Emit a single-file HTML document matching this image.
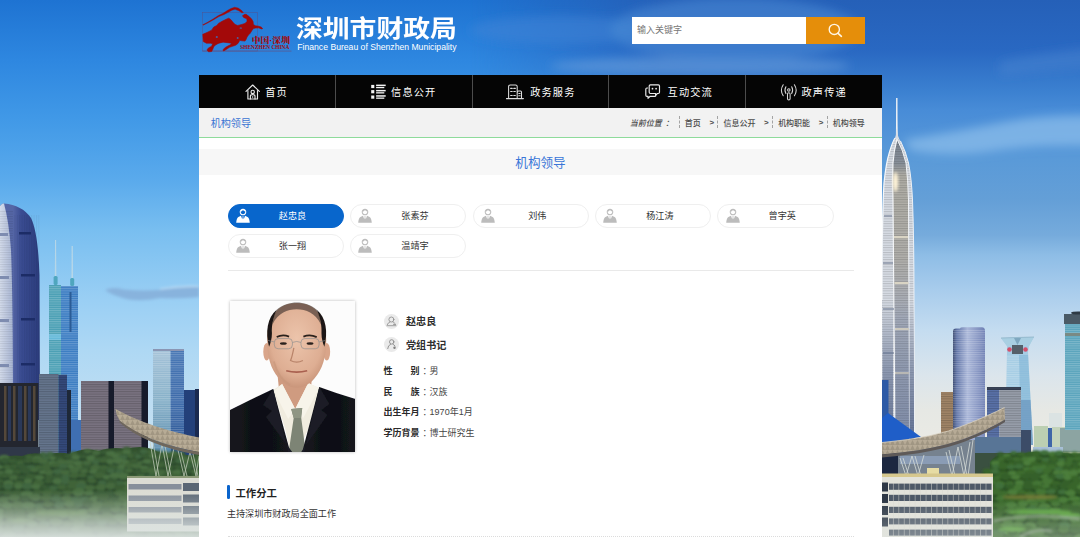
<!DOCTYPE html>
<html lang="zh-CN">
<head>
<meta charset="utf-8">
<title>机构领导 - 深圳市财政局</title>
<style>
*{box-sizing:border-box;margin:0;padding:0}
html,body{width:1080px;height:537px;overflow:hidden}
body{position:relative;font-family:"Liberation Sans","Noto Sans CJK SC",sans-serif;color:#333;background:#4a95dd}
a{color:inherit;text-decoration:none}
#bg{position:absolute;left:0;top:0;width:1080px;height:537px;display:block}
.abs{position:absolute}
/* header */
#logo{position:absolute;left:196px;top:2px;width:100px;height:56px}
#title{position:absolute;left:296px;top:11.5px;font-size:26.8px;font-weight:700;color:#fff;line-height:34px;white-space:nowrap;transform:scaleY(.89);transform-origin:0 50%}
#subtitle{position:absolute;left:297.3px;top:41.3px;font-size:8.64px;color:#fff;line-height:12px;white-space:nowrap}
#search{position:absolute;left:631.8px;top:17.4px;width:174.4px;height:26.4px;background:#fff;font-size:9px;color:#777;line-height:26.4px;padding-left:5.2px}
#sbtn{position:absolute;left:806px;top:17.4px;width:59px;height:26.4px;background:#e58e0a}
/* nav */
#nav{position:absolute;left:198.7px;top:74.8px;width:683.6px;height:33.6px;background:#050505}
#nav .dv{position:absolute;top:0;width:1px;height:33.6px;background:#4c4c4c}
#nav .ni{position:absolute;display:block}
#nav .nt{position:absolute;top:10.1px;line-height:15px;font-size:10.2px;font-weight:400;color:#fff;letter-spacing:1.15px;white-space:nowrap}
/* panel */
#panel{position:absolute;left:198.7px;top:108.3px;width:683.6px;height:430px;background:#fff}
#crumb{position:absolute;left:0;top:0;width:100%;height:30.1px;background:#f2f2f2;border-bottom:1.6px solid #8edb9b}
#crumb .cur{position:absolute;left:12px;top:1.6px;line-height:28px;font-size:10.1px;color:#3a74d2}
#crumb .path{position:absolute;right:17.5px;top:0;height:28px;display:flex;align-items:center;font-size:8px;font-weight:500;color:#4c4c4c;white-space:nowrap}
#crumb .path i{font-style:italic;margin-right:5.7px;color:#4a4a4a}
#crumb .path .s{border-left:1px dashed #a4a4a4;height:12px;margin:0 5px 0 0}
#crumb .path .g{margin:0 3.4px 0 8.6px;font-weight:700}
#band{position:absolute;left:0;top:40.8px;width:100%;height:25.8px;background:#f7f7f7;text-align:center;line-height:29.8px;font-size:12.6px;color:#3a76d8;overflow:hidden}

/* tabs */
.pill{position:absolute;width:116.2px;height:24px;border:1px solid #efefef;border-radius:12.5px;background:#fff;font-size:9.1px;color:#333;line-height:22px}
.pill.on{background:#0866cc;border-color:#0866cc;color:#fff}
.pill span{position:absolute;left:23px;right:0;top:.5px;text-align:center;padding-right:9.5px}
.pill svg{position:absolute;left:7.4px;top:3.2px;width:14px;height:15px;color:#bcbcbc}
.pill.on svg{color:#fff}
#hr1{position:absolute;left:227.5px;top:269.5px;width:626px;height:1px;background:#e9e9e9}
#photo{position:absolute;left:230px;top:301px;width:125.4px;height:151px;box-shadow:0 0 3px rgba(0,0,0,.28);background:#fdfdfd;overflow:hidden}
#photo svg{display:block;width:100%;height:100%}
.nm{position:absolute;left:406px;font-size:10.1px;font-weight:700;color:#2e2e2e;line-height:14px;white-space:nowrap}
.ic{position:absolute;left:384.3px;width:15px;height:15px}
.row{position:absolute;left:383.4px;font-size:9px;color:#444;line-height:14px;white-space:nowrap}
.row b{color:#2a2a2a;font-weight:700}
.row .cl{position:relative;left:3.1px;margin-right:1.2px}
#wk{position:absolute;left:227.3px;top:485.2px;width:2.8px;height:13.6px;background:#0a64cc;border-radius:1.2px}
#wkt{position:absolute;left:235.4px;top:486.6px;font-size:10.4px;font-weight:700;color:#222;line-height:14px}
#wkd{position:absolute;left:226.9px;top:506.5px;font-size:9.1px;color:#333;line-height:14px;white-space:nowrap}
#hr2{position:absolute;left:227.5px;top:535.6px;width:626px;height:0;border-top:1px dotted #dcdcdc}
</style>
</head>
<body>
<svg id="bg" viewBox="0 0 1080 537" preserveAspectRatio="none">
<defs>
<linearGradient id="skyL" x1="0" y1="0" x2="0" y2="537" gradientUnits="userSpaceOnUse">
<stop offset="0.000" stop-color="#1e73d2"/><stop offset="0.112" stop-color="#2e87e0"/><stop offset="0.223" stop-color="#4199e7"/><stop offset="0.335" stop-color="#5aaaec"/><stop offset="0.428" stop-color="#78bef0"/><stop offset="0.559" stop-color="#9acff4"/><stop offset="0.652" stop-color="#aed8f4"/><stop offset="0.726" stop-color="#badcf3"/><stop offset="0.819" stop-color="#c4e0f2"/><stop offset="1.000" stop-color="#d6e2e6"/>
</linearGradient>
<linearGradient id="skyR" x1="0" y1="0" x2="0" y2="537" gradientUnits="userSpaceOnUse">
<stop offset="0.000" stop-color="#2560b8"/><stop offset="0.093" stop-color="#2968c2"/><stop offset="0.168" stop-color="#3b80d0"/><stop offset="0.205" stop-color="#488cd7"/><stop offset="0.251" stop-color="#5193d8"/><stop offset="0.298" stop-color="#5a9ad8"/><stop offset="0.372" stop-color="#649fd7"/><stop offset="0.438" stop-color="#76abdc"/><stop offset="0.475" stop-color="#8ebde6"/><stop offset="0.540" stop-color="#a8ccec"/><stop offset="0.615" stop-color="#c4dcf0"/><stop offset="0.698" stop-color="#dbe5ec"/><stop offset="0.764" stop-color="#e6e8e4"/><stop offset="0.819" stop-color="#eaeae4"/><stop offset="1.000" stop-color="#e6e8e2"/>
</linearGradient>
<linearGradient id="hblend" x1="470" y1="0" x2="660" y2="0" gradientUnits="userSpaceOnUse">
<stop offset="0" stop-color="#fff" stop-opacity="0"/><stop offset="1" stop-color="#fff" stop-opacity="1"/>
</linearGradient>
<mask id="mR"><rect x="0" y="0" width="1080" height="537" fill="url(#hblend)"/></mask>
<linearGradient id="fogL" x1="0" y1="490" x2="0" y2="537" gradientUnits="userSpaceOnUse">
<stop offset="0" stop-color="#dfe6e2" stop-opacity="0"/><stop offset=".35" stop-color="#dfe6e2" stop-opacity=".3"/><stop offset=".7" stop-color="#dde4e2" stop-opacity=".68"/><stop offset="1" stop-color="#dde4e2" stop-opacity=".93"/>
</linearGradient>
<linearGradient id="fogR" x1="0" y1="500" x2="0" y2="537" gradientUnits="userSpaceOnUse">
<stop offset="0" stop-color="#e4eae6" stop-opacity="0"/><stop offset="1" stop-color="#dde4e2" stop-opacity=".35"/>
</linearGradient>
<linearGradient id="kkR" x1="13" y1="0" x2="40" y2="0" gradientUnits="userSpaceOnUse">
<stop offset="0" stop-color="#5566a6"/><stop offset=".3" stop-color="#3a4c92"/><stop offset="1" stop-color="#2b3c7c"/>
</linearGradient>
<linearGradient id="kkL" x1="0" y1="0" x2="13" y2="0" gradientUnits="userSpaceOnUse">
<stop offset="0" stop-color="#d4dcec"/><stop offset="1" stop-color="#a9b6d4"/>
</linearGradient>
<linearGradient id="pa" x1="882" y1="0" x2="914" y2="0" gradientUnits="userSpaceOnUse">
<stop offset="0" stop-color="#dfe4ec"/><stop offset=".2" stop-color="#aab4c6"/><stop offset=".36" stop-color="#f4f2ea"/><stop offset=".5" stop-color="#b9c2d0"/><stop offset=".8" stop-color="#c3cbd8"/><stop offset=".92" stop-color="#8f9db6"/><stop offset="1" stop-color="#dfe5ee"/>
</linearGradient>
<linearGradient id="paC" x1="0" y1="139" x2="0" y2="440" gradientUnits="userSpaceOnUse"><stop offset="0" stop-color="#7d8692"/><stop offset=".08" stop-color="#8a929c"/><stop offset=".12" stop-color="#b0aea6"/><stop offset=".4" stop-color="#b2b1ad"/><stop offset=".6" stop-color="#a9b0be"/><stop offset="1" stop-color="#a3adc2"/></linearGradient>
<linearGradient id="paD" x1="0" y1="300" x2="0" y2="440" gradientUnits="userSpaceOnUse"><stop offset="0" stop-color="#46587f" stop-opacity="0"/><stop offset=".5" stop-color="#46587f" stop-opacity=".5"/><stop offset="1" stop-color="#3c4e78" stop-opacity=".75"/></linearGradient>
<linearGradient id="gtL" x1="0" y1="349" x2="0" y2="460" gradientUnits="userSpaceOnUse"><stop offset="0" stop-color="#a4c2d8"/><stop offset=".45" stop-color="#86b0c8"/><stop offset="1" stop-color="#5486aa"/></linearGradient>
<linearGradient id="gtR" x1="0" y1="349" x2="0" y2="460" gradientUnits="userSpaceOnUse"><stop offset="0" stop-color="#4676b4"/><stop offset=".5" stop-color="#3a68a8"/><stop offset="1" stop-color="#2b5490"/></linearGradient>
<linearGradient id="b2" x1="953" y1="0" x2="985" y2="0" gradientUnits="userSpaceOnUse">
<stop offset="0" stop-color="#3a4a70"/><stop offset=".12" stop-color="#6175a8"/><stop offset=".45" stop-color="#a9b6d8"/><stop offset="1" stop-color="#6f80b4"/>
</linearGradient>
<pattern id="hs" width="4" height="2.2" patternUnits="userSpaceOnUse"><rect width="4" height="1" fill="#fff" fill-opacity=".22"/></pattern>
<pattern id="hsd" width="4" height="2.4" patternUnits="userSpaceOnUse"><rect width="4" height="1" fill="#000" fill-opacity=".18"/></pattern>
<pattern id="vs" width="2.4" height="4" patternUnits="userSpaceOnUse"><rect width="1" height="4" fill="#000" fill-opacity=".15"/></pattern>
<pattern id="win" width="3.1" height="11.4" patternUnits="userSpaceOnUse"><rect x="0" y="0" width="2.5" height="6" fill="#4d5866"/></pattern>
<pattern id="vsw" width="5.45" height="4" patternUnits="userSpaceOnUse"><rect x="4.6" width=".85" height="4" fill="#d8d8d0"/></pattern>
<pattern id="tr" width="26" height="17" patternUnits="userSpaceOnUse"><rect width="26" height="17" fill="#3b6632"/><ellipse cx="5" cy="4" rx="5" ry="3" fill="#4a7a3c"/><ellipse cx="6" cy="7.500" rx="5.500" ry="2.200" fill="#274d23"/><ellipse cx="18" cy="3" rx="5" ry="2.600" fill="#457438"/><ellipse cx="19" cy="6.300" rx="5.500" ry="2" fill="#2a5125"/><ellipse cx="12" cy="11.500" rx="5.500" ry="2.800" fill="#4b7c3d"/><ellipse cx="13" cy="15" rx="6" ry="2" fill="#264a22"/><ellipse cx="24" cy="12" rx="4.500" ry="2.600" fill="#42703a"/><ellipse cx="0" cy="13" rx="3.500" ry="2.400" fill="#42703a"/><ellipse cx="25" cy="15.500" rx="4" ry="1.600" fill="#29502a"/></pattern>
<filter id="bl3" x="-5%" y="-5%" width="110%" height="110%"><feGaussianBlur stdDeviation=".9"/></filter>
<pattern id="tri" width="5" height="5" patternUnits="userSpaceOnUse"><path d="M0 5 L2.5 0 L5 5Z" fill="#8e8472" fill-opacity=".55"/></pattern>
<filter id="bl" x="-20%" y="-20%" width="140%" height="140%"><feGaussianBlur stdDeviation="5"/></filter>
<filter id="bl2" x="-20%" y="-20%" width="140%" height="140%"><feGaussianBlur stdDeviation="1.6"/></filter>
</defs>
<rect x="0" y="0" width="1080" height="537" fill="url(#skyL)"/>
<rect x="0" y="0" width="1080" height="537" fill="url(#skyR)" mask="url(#mR)"/>
<!-- clouds -->
<g filter="url(#bl)">
<ellipse cx="700" cy="66" rx="150" ry="9" fill="#6ba0dc" fill-opacity=".55"/>
<ellipse cx="560" cy="30" rx="90" ry="14" fill="#3f86d8" fill-opacity=".5"/>
<ellipse cx="735" cy="30" rx="125" ry="32" fill="#4a8ad6" fill-opacity=".55"/>
<path d="M905 140 Q960 131 1010 121 Q1050 114 1110 116 L1110 146 Q1040 144 1000 150 Q950 158 910 150Z" fill="#8dbfeb" fill-opacity=".7"/>
<path d="M1000 62 Q1040 52 1110 46 L1110 66 Q1040 70 1000 76Z" fill="#4a86d0" fill-opacity=".45"/>
</g>
<g filter="url(#bl2)">
<path d="M105 290 Q112 286.500 124 289.500 Q150 292 170 288.500 Q186 286 199 287 L199 297 Q180 299 160 298 Q135 303 120 297 Q110 294 105 290Z" fill="#86b0da" fill-opacity=".9"/>
<path d="M160 289 Q180 285.500 199 286.500" stroke="#d4e8f8" stroke-width="1.200" fill="none" opacity=".8"/>
</g>
<g id="left">
<!-- twin tower -->
<path d="M55.2 283 L55.6 240 L56 283Z M71.8 283 L72.2 246 L72.6 283Z" stroke="#bcd8e6" stroke-width=".7" fill="#bcd8e6"/>
<rect x="53.6" y="276" width="4" height="9" rx="1.5" fill="#4fa6be"/><rect x="70.2" y="278" width="4" height="8" rx="1.5" fill="#4fa6be"/>
<rect x="49" y="285" width="12" height="177" fill="#4a9fb4"/>
<rect x="61" y="286" width="17" height="176" fill="#3a7cc2"/>
<rect x="49" y="334" width="12" height="6" fill="#63b8d8"/>
<rect x="49" y="285" width="29" height="165" fill="url(#hs)"/>
<rect x="69.5" y="292" width="2" height="40" fill="#2b5c96"/>
<!-- KK100 -->
<path d="M0 206 Q2 203 4 203.5 Q22 205 31 218 Q38 232 39.5 275 L40 420 L0 420Z" fill="url(#kkR)"/>
<path d="M0 206 Q2 203 4 203.5 Q9 222 11 250 Q13 300 13 420 L0 420Z" fill="url(#kkL)"/>
<rect x="0" y="210" width="13" height="210" fill="url(#hsd)" opacity=".5"/>
<rect x="14" y="215" width="26" height="205" fill="url(#vs)" opacity=".35"/>
<g fill="#1c2c66"><rect x="19" y="232" width="12" height="2.5"/><rect x="21" y="274" width="14" height="2.5"/><rect x="21" y="318" width="14" height="2.5"/><rect x="21" y="363" width="14" height="2.5"/></g>
<g fill="#7e8cb0"><rect x="0" y="233" width="8" height="3"/><rect x="0" y="276" width="9" height="3"/><rect x="0" y="319" width="9" height="3"/><rect x="0" y="364" width="9" height="3"/></g>
<!-- glass tower right -->
<rect x="153" y="349" width="17.5" height="112" fill="url(#gtL)"/>
<rect x="170.5" y="350" width="13.5" height="111" fill="url(#gtR)"/>
<rect x="153" y="349" width="31" height="100" fill="url(#hs)"/>
<rect x="153" y="349" width="31" height="2" fill="#8a96b4"/>
<!-- dark blue bldg -->
<rect x="184" y="390" width="11" height="70" fill="#23407a"/><rect x="195" y="389" width="4" height="71" fill="#1a2a50"/>
<!-- purple gray bldg -->
<rect x="81" y="381" width="67" height="82" fill="#7b7482"/>
<rect x="81" y="381" width="67" height="75" fill="url(#hsd)"/>
<rect x="108.5" y="381" width="5.5" height="70" fill="#171b2b"/><rect x="141.5" y="381" width="6.5" height="70" fill="#171b2b"/>
<!-- gray-blue bldg -->
<rect x="39" y="374" width="19.5" height="88" fill="#66768e"/><rect x="58.5" y="375" width="8.5" height="87" fill="#354a7c"/><rect x="67" y="390" width="4" height="72" fill="#1e2838"/>
<rect x="39" y="374" width="28" height="80" fill="url(#hsd)"/>
<rect x="71" y="420" width="10" height="42" fill="#3f6fb2"/>
<!-- dark group -->
<rect x="0" y="383" width="38.5" height="70" fill="#23262f"/>
<g fill="#54483a"><rect x="4" y="386" width="2.5" height="55"/><rect x="13" y="386" width="2.5" height="55"/><rect x="24" y="386" width="2.5" height="55"/><rect x="33" y="386" width="2.5" height="55"/></g>
<g fill="#2a3858"><rect x="8" y="386" width="3" height="55"/><rect x="18" y="386" width="4" height="55"/><rect x="28" y="386" width="3" height="55"/></g>
<rect x="0" y="447" width="40" height="15" fill="#2f3848"/>
<!-- trees -->
<path d="M-3 459 Q10 454 22 456 Q34 451 46 455 Q58 451 70 454 Q84 447 98 451 Q112 446 126 449 Q140 445 152 449 L160 453 L202 456 L202 540 L-3 540Z" fill="#31502e"/>
<g filter="url(#bl3)">
<ellipse cx="126.8" cy="452.0" rx="4.8" ry="2.2" fill="#27422a"/>
<ellipse cx="126.8" cy="449.5" rx="4.5" ry="2.8" fill="#3a5d36"/>
<ellipse cx="43.0" cy="456.1" rx="3.5" ry="1.7" fill="#27422a"/>
<ellipse cx="43.0" cy="454.2" rx="3.3" ry="2.1" fill="#416640"/>
<ellipse cx="50.0" cy="455.7" rx="3.9" ry="1.6" fill="#27422a"/>
<ellipse cx="50.0" cy="453.9" rx="3.7" ry="2.1" fill="#416640"/>
<ellipse cx="73.4" cy="455.4" rx="4.1" ry="1.7" fill="#27422a"/>
<ellipse cx="73.4" cy="453.5" rx="3.9" ry="2.1" fill="#3f6339"/>
<ellipse cx="87.6" cy="453.4" rx="4.1" ry="1.9" fill="#27422a"/>
<ellipse cx="87.6" cy="451.3" rx="3.9" ry="2.3" fill="#45693d"/>
<ellipse cx="96.3" cy="455.1" rx="4.5" ry="2.2" fill="#27422a"/>
<ellipse cx="96.3" cy="452.7" rx="4.3" ry="2.7" fill="#45693d"/>
<ellipse cx="104.1" cy="454.1" rx="3.9" ry="1.8" fill="#27422a"/>
<ellipse cx="104.1" cy="452.2" rx="3.7" ry="2.2" fill="#385a35"/>
<ellipse cx="110.8" cy="455.8" rx="5.1" ry="2.1" fill="#27422a"/>
<ellipse cx="110.8" cy="453.4" rx="4.9" ry="2.6" fill="#4a7042"/>
<ellipse cx="119.2" cy="454.9" rx="4.2" ry="1.7" fill="#27422a"/>
<ellipse cx="119.2" cy="453.0" rx="4.0" ry="2.1" fill="#3f6339"/>
<ellipse cx="126.7" cy="454.3" rx="4.8" ry="2.0" fill="#27422a"/>
<ellipse cx="126.7" cy="452.0" rx="4.6" ry="2.5" fill="#4a7042"/>
<ellipse cx="135.0" cy="454.8" rx="4.0" ry="1.6" fill="#27422a"/>
<ellipse cx="135.0" cy="453.0" rx="3.8" ry="2.0" fill="#385a35"/>
<ellipse cx="143.7" cy="453.8" rx="4.3" ry="2.0" fill="#27422a"/>
<ellipse cx="143.7" cy="451.6" rx="4.1" ry="2.5" fill="#416640"/>
<ellipse cx="151.4" cy="454.4" rx="5.1" ry="2.1" fill="#27422a"/>
<ellipse cx="151.4" cy="452.1" rx="4.8" ry="2.6" fill="#3f6339"/>
<ellipse cx="157.8" cy="454.2" rx="3.9" ry="1.5" fill="#27422a"/>
<ellipse cx="157.8" cy="452.5" rx="3.7" ry="1.9" fill="#3a5d36"/>
<ellipse cx="165.0" cy="454.7" rx="3.7" ry="1.6" fill="#27422a"/>
<ellipse cx="165.0" cy="452.9" rx="3.5" ry="2.0" fill="#4a7042"/>
<ellipse cx="173.6" cy="455.6" rx="4.7" ry="2.1" fill="#27422a"/>
<ellipse cx="173.6" cy="453.2" rx="4.5" ry="2.6" fill="#45693d"/>
<ellipse cx="181.3" cy="456.0" rx="4.3" ry="1.8" fill="#27422a"/>
<ellipse cx="181.3" cy="454.0" rx="4.1" ry="2.3" fill="#3a5d36"/>
<ellipse cx="197.8" cy="454.9" rx="4.8" ry="2.0" fill="#27422a"/>
<ellipse cx="197.8" cy="452.7" rx="4.5" ry="2.5" fill="#3f6339"/>
<ellipse cx="-3.2" cy="461.0" rx="4.9" ry="2.3" fill="#27422a"/>
<ellipse cx="-3.2" cy="458.4" rx="4.7" ry="2.9" fill="#3a5d36"/>
<ellipse cx="4.2" cy="460.6" rx="5.2" ry="2.5" fill="#27422a"/>
<ellipse cx="4.2" cy="457.8" rx="5.0" ry="3.1" fill="#4a7042"/>
<ellipse cx="29.0" cy="458.5" rx="3.6" ry="1.4" fill="#27422a"/>
<ellipse cx="29.0" cy="456.9" rx="3.5" ry="1.8" fill="#3f6339"/>
<ellipse cx="37.1" cy="461.4" rx="5.2" ry="2.4" fill="#27422a"/>
<ellipse cx="37.1" cy="458.7" rx="5.0" ry="3.0" fill="#4a7042"/>
<ellipse cx="45.9" cy="460.0" rx="4.4" ry="1.9" fill="#27422a"/>
<ellipse cx="45.9" cy="457.8" rx="4.2" ry="2.4" fill="#416640"/>
<ellipse cx="52.6" cy="459.8" rx="3.7" ry="1.6" fill="#27422a"/>
<ellipse cx="52.6" cy="458.0" rx="3.5" ry="2.1" fill="#4a7042"/>
<ellipse cx="59.1" cy="460.6" rx="3.8" ry="1.8" fill="#27422a"/>
<ellipse cx="59.1" cy="458.6" rx="3.6" ry="2.2" fill="#385a35"/>
<ellipse cx="68.0" cy="458.2" rx="3.6" ry="1.5" fill="#27422a"/>
<ellipse cx="68.0" cy="456.5" rx="3.5" ry="1.9" fill="#385a35"/>
<ellipse cx="76.0" cy="459.6" rx="5.0" ry="2.1" fill="#27422a"/>
<ellipse cx="76.0" cy="457.3" rx="4.7" ry="2.6" fill="#4a7042"/>
<ellipse cx="83.7" cy="458.5" rx="4.3" ry="1.8" fill="#27422a"/>
<ellipse cx="83.7" cy="456.5" rx="4.1" ry="2.2" fill="#385a35"/>
<ellipse cx="91.3" cy="461.0" rx="5.3" ry="2.5" fill="#27422a"/>
<ellipse cx="91.3" cy="458.2" rx="5.0" ry="3.2" fill="#4a7042"/>
<ellipse cx="98.3" cy="460.3" rx="4.0" ry="1.6" fill="#27422a"/>
<ellipse cx="98.3" cy="458.5" rx="3.8" ry="2.0" fill="#3a5d36"/>
<ellipse cx="106.9" cy="461.0" rx="4.9" ry="2.4" fill="#27422a"/>
<ellipse cx="106.9" cy="458.3" rx="4.7" ry="3.0" fill="#3a5d36"/>
<ellipse cx="115.5" cy="458.5" rx="4.5" ry="2.2" fill="#27422a"/>
<ellipse cx="115.5" cy="456.1" rx="4.3" ry="2.7" fill="#4a7042"/>
<ellipse cx="122.9" cy="459.8" rx="4.8" ry="2.2" fill="#27422a"/>
<ellipse cx="122.9" cy="457.3" rx="4.6" ry="2.8" fill="#416640"/>
<ellipse cx="130.5" cy="457.9" rx="3.7" ry="1.8" fill="#27422a"/>
<ellipse cx="130.5" cy="456.0" rx="3.5" ry="2.2" fill="#3f6339"/>
<ellipse cx="138.7" cy="458.8" rx="4.3" ry="1.9" fill="#27422a"/>
<ellipse cx="138.7" cy="456.6" rx="4.1" ry="2.4" fill="#416640"/>
<ellipse cx="145.2" cy="458.1" rx="4.4" ry="1.7" fill="#27422a"/>
<ellipse cx="145.2" cy="456.1" rx="4.2" ry="2.1" fill="#3a5d36"/>
<ellipse cx="152.3" cy="458.0" rx="3.7" ry="1.7" fill="#27422a"/>
<ellipse cx="152.3" cy="456.2" rx="3.5" ry="2.1" fill="#4a7042"/>
<ellipse cx="159.0" cy="459.6" rx="4.8" ry="2.0" fill="#27422a"/>
<ellipse cx="159.0" cy="457.3" rx="4.5" ry="2.5" fill="#3f6339"/>
<ellipse cx="167.3" cy="458.4" rx="4.5" ry="1.8" fill="#27422a"/>
<ellipse cx="167.3" cy="456.3" rx="4.3" ry="2.2" fill="#3f6339"/>
<ellipse cx="175.7" cy="459.0" rx="3.7" ry="1.5" fill="#27422a"/>
<ellipse cx="175.7" cy="457.3" rx="3.5" ry="1.9" fill="#3a5d36"/>
<ellipse cx="183.5" cy="461.1" rx="4.5" ry="2.2" fill="#27422a"/>
<ellipse cx="183.5" cy="458.6" rx="4.3" ry="2.8" fill="#45693d"/>
<ellipse cx="191.0" cy="460.4" rx="5.3" ry="2.1" fill="#27422a"/>
<ellipse cx="191.0" cy="458.1" rx="5.0" ry="2.6" fill="#385a35"/>
<ellipse cx="198.4" cy="459.2" rx="4.0" ry="1.9" fill="#27422a"/>
<ellipse cx="198.4" cy="457.1" rx="3.8" ry="2.4" fill="#3f6339"/>
<ellipse cx="-3.9" cy="465.5" rx="5.5" ry="2.4" fill="#27422a"/>
<ellipse cx="-3.9" cy="462.8" rx="5.2" ry="3.0" fill="#385a35"/>
<ellipse cx="5.4" cy="463.6" rx="5.4" ry="2.5" fill="#27422a"/>
<ellipse cx="5.4" cy="460.7" rx="5.1" ry="3.2" fill="#385a35"/>
<ellipse cx="12.4" cy="463.1" rx="4.5" ry="1.7" fill="#27422a"/>
<ellipse cx="12.4" cy="461.2" rx="4.3" ry="2.2" fill="#3a5d36"/>
<ellipse cx="20.5" cy="465.2" rx="4.3" ry="2.1" fill="#27422a"/>
<ellipse cx="20.5" cy="462.8" rx="4.1" ry="2.6" fill="#3f6339"/>
<ellipse cx="28.1" cy="463.0" rx="4.6" ry="2.0" fill="#27422a"/>
<ellipse cx="28.1" cy="460.7" rx="4.3" ry="2.5" fill="#3a5d36"/>
<ellipse cx="36.1" cy="462.8" rx="5.3" ry="2.0" fill="#27422a"/>
<ellipse cx="36.1" cy="460.5" rx="5.0" ry="2.6" fill="#3f6339"/>
<ellipse cx="43.3" cy="463.8" rx="5.2" ry="2.1" fill="#27422a"/>
<ellipse cx="43.3" cy="461.4" rx="5.0" ry="2.6" fill="#45693d"/>
<ellipse cx="52.6" cy="465.6" rx="4.7" ry="2.2" fill="#27422a"/>
<ellipse cx="52.6" cy="463.1" rx="4.5" ry="2.7" fill="#4a7042"/>
<ellipse cx="61.8" cy="464.3" rx="5.5" ry="2.2" fill="#27422a"/>
<ellipse cx="61.8" cy="461.9" rx="5.3" ry="2.7" fill="#45693d"/>
<ellipse cx="69.7" cy="464.8" rx="5.3" ry="2.4" fill="#27422a"/>
<ellipse cx="69.7" cy="462.1" rx="5.0" ry="2.9" fill="#45693d"/>
<ellipse cx="77.8" cy="465.2" rx="4.8" ry="2.0" fill="#27422a"/>
<ellipse cx="77.8" cy="463.0" rx="4.6" ry="2.5" fill="#4a7042"/>
<ellipse cx="87.0" cy="465.3" rx="4.9" ry="2.0" fill="#27422a"/>
<ellipse cx="87.0" cy="463.0" rx="4.6" ry="2.5" fill="#45693d"/>
<ellipse cx="96.3" cy="464.2" rx="4.8" ry="1.9" fill="#27422a"/>
<ellipse cx="96.3" cy="462.0" rx="4.6" ry="2.4" fill="#416640"/>
<ellipse cx="103.2" cy="462.7" rx="4.4" ry="2.0" fill="#27422a"/>
<ellipse cx="103.2" cy="460.4" rx="4.2" ry="2.5" fill="#3f6339"/>
<ellipse cx="111.3" cy="464.3" rx="5.2" ry="2.3" fill="#27422a"/>
<ellipse cx="111.3" cy="461.6" rx="5.0" ry="2.9" fill="#4a7042"/>
<ellipse cx="118.2" cy="463.6" rx="5.5" ry="2.4" fill="#27422a"/>
<ellipse cx="118.2" cy="460.9" rx="5.2" ry="3.0" fill="#4a7042"/>
<ellipse cx="125.6" cy="463.8" rx="4.0" ry="1.7" fill="#27422a"/>
<ellipse cx="125.6" cy="461.9" rx="3.8" ry="2.1" fill="#4a7042"/>
<ellipse cx="133.7" cy="462.7" rx="4.5" ry="1.7" fill="#27422a"/>
<ellipse cx="133.7" cy="460.8" rx="4.3" ry="2.2" fill="#3a5d36"/>
<ellipse cx="140.8" cy="464.5" rx="3.8" ry="1.5" fill="#27422a"/>
<ellipse cx="140.8" cy="462.8" rx="3.6" ry="1.9" fill="#45693d"/>
<ellipse cx="147.5" cy="463.6" rx="5.1" ry="2.1" fill="#27422a"/>
<ellipse cx="147.5" cy="461.3" rx="4.9" ry="2.6" fill="#4a7042"/>
<ellipse cx="154.4" cy="464.6" rx="4.0" ry="1.7" fill="#27422a"/>
<ellipse cx="154.4" cy="462.6" rx="3.8" ry="2.2" fill="#3a5d36"/>
<ellipse cx="163.0" cy="464.9" rx="5.4" ry="2.1" fill="#27422a"/>
<ellipse cx="163.0" cy="462.5" rx="5.1" ry="2.6" fill="#385a35"/>
<ellipse cx="170.8" cy="463.9" rx="4.0" ry="1.6" fill="#27422a"/>
<ellipse cx="170.8" cy="462.0" rx="3.8" ry="2.0" fill="#385a35"/>
<ellipse cx="178.9" cy="463.2" rx="4.1" ry="1.8" fill="#27422a"/>
<ellipse cx="178.9" cy="461.1" rx="3.9" ry="2.3" fill="#416640"/>
<ellipse cx="187.9" cy="463.9" rx="5.1" ry="2.4" fill="#27422a"/>
<ellipse cx="187.9" cy="461.1" rx="4.9" ry="3.0" fill="#45693d"/>
<ellipse cx="195.4" cy="463.9" rx="5.5" ry="2.2" fill="#27422a"/>
<ellipse cx="195.4" cy="461.4" rx="5.2" ry="2.8" fill="#45693d"/>
<ellipse cx="-1.1" cy="468.9" rx="4.4" ry="1.7" fill="#27422a"/>
<ellipse cx="-1.1" cy="467.0" rx="4.2" ry="2.1" fill="#4a7042"/>
<ellipse cx="7.3" cy="469.1" rx="4.2" ry="1.9" fill="#27422a"/>
<ellipse cx="7.3" cy="466.9" rx="4.0" ry="2.4" fill="#3f6339"/>
<ellipse cx="14.5" cy="469.0" rx="4.6" ry="2.2" fill="#27422a"/>
<ellipse cx="14.5" cy="466.5" rx="4.3" ry="2.7" fill="#3a5d36"/>
<ellipse cx="21.7" cy="469.0" rx="5.3" ry="2.3" fill="#27422a"/>
<ellipse cx="21.7" cy="466.3" rx="5.1" ry="2.9" fill="#385a35"/>
<ellipse cx="30.9" cy="469.3" rx="4.8" ry="1.8" fill="#27422a"/>
<ellipse cx="30.9" cy="467.2" rx="4.6" ry="2.3" fill="#416640"/>
<ellipse cx="39.5" cy="469.7" rx="4.8" ry="1.9" fill="#27422a"/>
<ellipse cx="39.5" cy="467.5" rx="4.6" ry="2.4" fill="#3f6339"/>
<ellipse cx="46.9" cy="470.5" rx="5.8" ry="2.8" fill="#27422a"/>
<ellipse cx="46.9" cy="467.3" rx="5.5" ry="3.5" fill="#3f6339"/>
<ellipse cx="55.4" cy="467.5" rx="5.2" ry="2.0" fill="#27422a"/>
<ellipse cx="55.4" cy="465.2" rx="4.9" ry="2.5" fill="#3f6339"/>
<ellipse cx="63.2" cy="468.6" rx="4.9" ry="2.1" fill="#27422a"/>
<ellipse cx="63.2" cy="466.2" rx="4.6" ry="2.6" fill="#416640"/>
<ellipse cx="71.1" cy="468.5" rx="3.9" ry="1.6" fill="#27422a"/>
<ellipse cx="71.1" cy="466.7" rx="3.8" ry="2.0" fill="#4a7042"/>
<ellipse cx="79.3" cy="469.1" rx="4.6" ry="1.9" fill="#27422a"/>
<ellipse cx="79.3" cy="467.0" rx="4.4" ry="2.3" fill="#45693d"/>
<ellipse cx="86.4" cy="469.2" rx="4.5" ry="1.8" fill="#27422a"/>
<ellipse cx="86.4" cy="467.2" rx="4.3" ry="2.2" fill="#385a35"/>
<ellipse cx="95.7" cy="470.4" rx="5.7" ry="2.5" fill="#27422a"/>
<ellipse cx="95.7" cy="467.5" rx="5.4" ry="3.2" fill="#45693d"/>
<ellipse cx="104.0" cy="470.3" rx="5.4" ry="2.2" fill="#27422a"/>
<ellipse cx="104.0" cy="467.8" rx="5.2" ry="2.8" fill="#3f6339"/>
<ellipse cx="113.0" cy="469.8" rx="5.4" ry="2.3" fill="#27422a"/>
<ellipse cx="113.0" cy="467.1" rx="5.2" ry="2.9" fill="#3a5d36"/>
<ellipse cx="122.3" cy="469.7" rx="5.3" ry="2.5" fill="#27422a"/>
<ellipse cx="122.3" cy="466.9" rx="5.1" ry="3.1" fill="#4a7042"/>
<ellipse cx="129.8" cy="467.9" rx="5.4" ry="2.2" fill="#27422a"/>
<ellipse cx="129.8" cy="465.4" rx="5.1" ry="2.8" fill="#3f6339"/>
<ellipse cx="136.7" cy="468.5" rx="5.1" ry="2.3" fill="#27422a"/>
<ellipse cx="136.7" cy="465.9" rx="4.9" ry="2.9" fill="#45693d"/>
<ellipse cx="144.3" cy="469.7" rx="4.4" ry="1.8" fill="#27422a"/>
<ellipse cx="144.3" cy="467.7" rx="4.2" ry="2.3" fill="#4a7042"/>
<ellipse cx="152.8" cy="469.0" rx="4.6" ry="2.3" fill="#27422a"/>
<ellipse cx="152.8" cy="466.4" rx="4.4" ry="2.9" fill="#385a35"/>
<ellipse cx="160.3" cy="467.5" rx="4.6" ry="2.1" fill="#27422a"/>
<ellipse cx="160.3" cy="465.2" rx="4.4" ry="2.6" fill="#3f6339"/>
<ellipse cx="168.9" cy="469.1" rx="4.4" ry="1.9" fill="#27422a"/>
<ellipse cx="168.9" cy="467.0" rx="4.1" ry="2.3" fill="#3f6339"/>
<ellipse cx="177.9" cy="468.6" rx="3.9" ry="1.6" fill="#27422a"/>
<ellipse cx="177.9" cy="466.8" rx="3.7" ry="2.0" fill="#3a5d36"/>
<ellipse cx="187.3" cy="469.1" rx="4.8" ry="2.4" fill="#27422a"/>
<ellipse cx="187.3" cy="466.5" rx="4.6" ry="3.0" fill="#416640"/>
<ellipse cx="196.5" cy="467.5" rx="4.7" ry="2.1" fill="#27422a"/>
<ellipse cx="196.5" cy="465.1" rx="4.5" ry="2.7" fill="#416640"/>
<ellipse cx="-0.2" cy="475.0" rx="4.3" ry="1.9" fill="#27422a"/>
<ellipse cx="-0.2" cy="472.8" rx="4.1" ry="2.4" fill="#45693d"/>
<ellipse cx="9.4" cy="474.2" rx="5.2" ry="2.2" fill="#27422a"/>
<ellipse cx="9.4" cy="471.7" rx="5.0" ry="2.8" fill="#4a7042"/>
<ellipse cx="17.7" cy="474.1" rx="5.2" ry="2.2" fill="#27422a"/>
<ellipse cx="17.7" cy="471.6" rx="5.0" ry="2.7" fill="#3a5d36"/>
<ellipse cx="26.3" cy="473.9" rx="5.9" ry="2.7" fill="#27422a"/>
<ellipse cx="26.3" cy="470.9" rx="5.6" ry="3.3" fill="#385a35"/>
<ellipse cx="34.3" cy="472.0" rx="4.5" ry="1.7" fill="#27422a"/>
<ellipse cx="34.3" cy="470.1" rx="4.3" ry="2.2" fill="#45693d"/>
<ellipse cx="42.6" cy="474.0" rx="4.1" ry="1.7" fill="#27422a"/>
<ellipse cx="42.6" cy="472.1" rx="3.9" ry="2.1" fill="#4a7042"/>
<ellipse cx="49.9" cy="475.6" rx="5.9" ry="2.3" fill="#27422a"/>
<ellipse cx="49.9" cy="473.0" rx="5.6" ry="2.9" fill="#45693d"/>
<ellipse cx="58.3" cy="474.2" rx="6.0" ry="2.4" fill="#27422a"/>
<ellipse cx="58.3" cy="471.5" rx="5.7" ry="3.0" fill="#416640"/>
<ellipse cx="65.7" cy="475.1" rx="5.8" ry="2.3" fill="#27422a"/>
<ellipse cx="65.7" cy="472.5" rx="5.5" ry="2.9" fill="#45693d"/>
<ellipse cx="74.6" cy="473.0" rx="5.3" ry="2.3" fill="#27422a"/>
<ellipse cx="74.6" cy="470.4" rx="5.0" ry="2.8" fill="#45693d"/>
<ellipse cx="84.2" cy="473.2" rx="4.3" ry="1.8" fill="#27422a"/>
<ellipse cx="84.2" cy="471.1" rx="4.1" ry="2.3" fill="#45693d"/>
<ellipse cx="93.3" cy="473.7" rx="4.5" ry="2.0" fill="#27422a"/>
<ellipse cx="93.3" cy="471.4" rx="4.3" ry="2.5" fill="#4a7042"/>
<ellipse cx="101.5" cy="474.8" rx="5.6" ry="2.2" fill="#27422a"/>
<ellipse cx="101.5" cy="472.3" rx="5.4" ry="2.8" fill="#3a5d36"/>
<ellipse cx="110.7" cy="473.1" rx="4.2" ry="2.0" fill="#27422a"/>
<ellipse cx="110.7" cy="470.8" rx="4.0" ry="2.6" fill="#416640"/>
<ellipse cx="119.7" cy="473.5" rx="4.5" ry="2.1" fill="#27422a"/>
<ellipse cx="119.7" cy="471.1" rx="4.3" ry="2.6" fill="#416640"/>
<ellipse cx="128.8" cy="472.7" rx="4.6" ry="1.9" fill="#27422a"/>
<ellipse cx="128.8" cy="470.6" rx="4.3" ry="2.3" fill="#45693d"/>
<ellipse cx="137.4" cy="474.3" rx="4.4" ry="2.0" fill="#27422a"/>
<ellipse cx="137.4" cy="472.0" rx="4.2" ry="2.5" fill="#385a35"/>
<ellipse cx="144.7" cy="473.3" rx="4.9" ry="2.2" fill="#27422a"/>
<ellipse cx="144.7" cy="470.9" rx="4.6" ry="2.7" fill="#3f6339"/>
<ellipse cx="152.5" cy="473.9" rx="5.5" ry="2.7" fill="#27422a"/>
<ellipse cx="152.5" cy="470.9" rx="5.3" ry="3.3" fill="#45693d"/>
<ellipse cx="161.2" cy="474.3" rx="4.8" ry="2.1" fill="#27422a"/>
<ellipse cx="161.2" cy="471.9" rx="4.5" ry="2.6" fill="#45693d"/>
<ellipse cx="169.4" cy="473.8" rx="4.3" ry="2.1" fill="#27422a"/>
<ellipse cx="169.4" cy="471.5" rx="4.1" ry="2.6" fill="#3f6339"/>
<ellipse cx="177.8" cy="475.5" rx="5.7" ry="2.7" fill="#27422a"/>
<ellipse cx="177.8" cy="472.5" rx="5.4" ry="3.3" fill="#4a7042"/>
<ellipse cx="186.2" cy="473.5" rx="5.6" ry="2.4" fill="#27422a"/>
<ellipse cx="186.2" cy="470.8" rx="5.4" ry="3.0" fill="#385a35"/>
<ellipse cx="195.7" cy="474.3" rx="4.6" ry="2.1" fill="#27422a"/>
<ellipse cx="195.7" cy="471.8" rx="4.4" ry="2.7" fill="#45693d"/>
<ellipse cx="204.1" cy="473.4" rx="4.2" ry="2.0" fill="#27422a"/>
<ellipse cx="204.1" cy="471.2" rx="4.0" ry="2.5" fill="#3f6339"/>
<ellipse cx="-2.8" cy="480.3" rx="5.1" ry="2.4" fill="#27422a"/>
<ellipse cx="-2.8" cy="477.5" rx="4.9" ry="3.0" fill="#3f6339"/>
<ellipse cx="4.8" cy="478.2" rx="5.5" ry="2.2" fill="#27422a"/>
<ellipse cx="4.8" cy="475.7" rx="5.3" ry="2.7" fill="#3a5d36"/>
<ellipse cx="13.7" cy="480.0" rx="4.8" ry="2.3" fill="#27422a"/>
<ellipse cx="13.7" cy="477.4" rx="4.6" ry="2.9" fill="#45693d"/>
<ellipse cx="22.1" cy="479.5" rx="4.9" ry="1.9" fill="#27422a"/>
<ellipse cx="22.1" cy="477.3" rx="4.7" ry="2.4" fill="#385a35"/>
<ellipse cx="30.8" cy="480.0" rx="6.0" ry="2.8" fill="#27422a"/>
<ellipse cx="30.8" cy="476.9" rx="5.7" ry="3.5" fill="#3a5d36"/>
<ellipse cx="39.5" cy="479.7" rx="4.8" ry="2.0" fill="#27422a"/>
<ellipse cx="39.5" cy="477.5" rx="4.5" ry="2.5" fill="#4a7042"/>
<ellipse cx="49.8" cy="479.6" rx="5.2" ry="2.0" fill="#27422a"/>
<ellipse cx="49.8" cy="477.3" rx="5.0" ry="2.5" fill="#3a5d36"/>
<ellipse cx="57.3" cy="480.0" rx="5.4" ry="2.5" fill="#27422a"/>
<ellipse cx="57.3" cy="477.1" rx="5.1" ry="3.2" fill="#385a35"/>
<ellipse cx="66.3" cy="480.3" rx="5.3" ry="2.5" fill="#27422a"/>
<ellipse cx="66.3" cy="477.5" rx="5.0" ry="3.1" fill="#416640"/>
<ellipse cx="74.3" cy="478.1" rx="5.1" ry="2.4" fill="#27422a"/>
<ellipse cx="74.3" cy="475.4" rx="4.8" ry="3.0" fill="#3f6339"/>
<ellipse cx="82.3" cy="477.4" rx="4.5" ry="1.9" fill="#27422a"/>
<ellipse cx="82.3" cy="475.3" rx="4.3" ry="2.3" fill="#3f6339"/>
<ellipse cx="91.6" cy="479.6" rx="4.3" ry="1.9" fill="#27422a"/>
<ellipse cx="91.6" cy="477.5" rx="4.1" ry="2.4" fill="#416640"/>
<ellipse cx="99.3" cy="478.4" rx="5.7" ry="2.7" fill="#27422a"/>
<ellipse cx="99.3" cy="475.3" rx="5.4" ry="3.4" fill="#3f6339"/>
<ellipse cx="106.8" cy="479.4" rx="4.3" ry="2.1" fill="#27422a"/>
<ellipse cx="106.8" cy="477.1" rx="4.1" ry="2.6" fill="#4a7042"/>
<ellipse cx="114.9" cy="478.6" rx="5.7" ry="2.5" fill="#27422a"/>
<ellipse cx="114.9" cy="475.8" rx="5.5" ry="3.2" fill="#4a7042"/>
<ellipse cx="123.5" cy="479.3" rx="6.1" ry="2.8" fill="#27422a"/>
<ellipse cx="123.5" cy="476.1" rx="5.9" ry="3.5" fill="#4a7042"/>
<ellipse cx="132.3" cy="479.7" rx="4.3" ry="1.9" fill="#27422a"/>
<ellipse cx="132.3" cy="477.5" rx="4.1" ry="2.4" fill="#3f6339"/>
<ellipse cx="140.9" cy="480.6" rx="5.5" ry="2.6" fill="#27422a"/>
<ellipse cx="140.9" cy="477.6" rx="5.3" ry="3.3" fill="#4a7042"/>
<ellipse cx="150.8" cy="480.9" rx="6.1" ry="2.8" fill="#27422a"/>
<ellipse cx="150.8" cy="477.8" rx="5.8" ry="3.5" fill="#416640"/>
<ellipse cx="159.3" cy="477.5" rx="4.4" ry="2.1" fill="#27422a"/>
<ellipse cx="159.3" cy="475.1" rx="4.2" ry="2.7" fill="#45693d"/>
<ellipse cx="167.4" cy="478.4" rx="5.5" ry="2.5" fill="#27422a"/>
<ellipse cx="167.4" cy="475.6" rx="5.2" ry="3.1" fill="#3a5d36"/>
<ellipse cx="175.4" cy="479.0" rx="4.7" ry="2.3" fill="#27422a"/>
<ellipse cx="175.4" cy="476.4" rx="4.5" ry="2.9" fill="#3f6339"/>
<ellipse cx="184.2" cy="479.4" rx="4.8" ry="1.9" fill="#27422a"/>
<ellipse cx="184.2" cy="477.3" rx="4.5" ry="2.4" fill="#45693d"/>
<ellipse cx="194.3" cy="479.4" rx="4.2" ry="1.8" fill="#27422a"/>
<ellipse cx="194.3" cy="477.4" rx="4.0" ry="2.3" fill="#3f6339"/>
<ellipse cx="202.6" cy="478.2" rx="4.9" ry="2.2" fill="#27422a"/>
<ellipse cx="202.6" cy="475.7" rx="4.7" ry="2.7" fill="#416640"/>
<ellipse cx="-1.1" cy="483.3" rx="4.9" ry="2.0" fill="#27422a"/>
<ellipse cx="-1.1" cy="481.1" rx="4.7" ry="2.5" fill="#3a5d36"/>
<ellipse cx="8.4" cy="486.3" rx="5.5" ry="2.6" fill="#27422a"/>
<ellipse cx="8.4" cy="483.3" rx="5.2" ry="3.3" fill="#4a7042"/>
<ellipse cx="18.8" cy="485.8" rx="5.0" ry="2.2" fill="#27422a"/>
<ellipse cx="18.8" cy="483.3" rx="4.8" ry="2.8" fill="#3f6339"/>
<ellipse cx="28.0" cy="483.6" rx="4.4" ry="2.2" fill="#27422a"/>
<ellipse cx="28.0" cy="481.2" rx="4.2" ry="2.7" fill="#4a7042"/>
<ellipse cx="38.6" cy="486.1" rx="6.0" ry="2.8" fill="#27422a"/>
<ellipse cx="38.6" cy="482.9" rx="5.7" ry="3.5" fill="#3f6339"/>
<ellipse cx="48.3" cy="483.3" rx="4.3" ry="1.9" fill="#27422a"/>
<ellipse cx="48.3" cy="481.2" rx="4.1" ry="2.3" fill="#3a5d36"/>
<ellipse cx="57.3" cy="484.1" rx="5.2" ry="2.5" fill="#27422a"/>
<ellipse cx="57.3" cy="481.3" rx="4.9" ry="3.1" fill="#4a7042"/>
<ellipse cx="65.5" cy="484.1" rx="4.8" ry="2.3" fill="#27422a"/>
<ellipse cx="65.5" cy="481.5" rx="4.6" ry="2.9" fill="#416640"/>
<ellipse cx="73.6" cy="485.5" rx="5.6" ry="2.5" fill="#27422a"/>
<ellipse cx="73.6" cy="482.7" rx="5.4" ry="3.1" fill="#3f6339"/>
<ellipse cx="81.7" cy="485.1" rx="4.3" ry="2.0" fill="#27422a"/>
<ellipse cx="81.7" cy="482.8" rx="4.1" ry="2.5" fill="#45693d"/>
<ellipse cx="91.9" cy="483.3" rx="4.9" ry="2.3" fill="#27422a"/>
<ellipse cx="91.9" cy="480.8" rx="4.6" ry="2.8" fill="#3f6339"/>
<ellipse cx="102.3" cy="484.9" rx="4.5" ry="2.1" fill="#27422a"/>
<ellipse cx="102.3" cy="482.6" rx="4.3" ry="2.6" fill="#416640"/>
<ellipse cx="112.6" cy="484.3" rx="6.0" ry="2.6" fill="#27422a"/>
<ellipse cx="112.6" cy="481.4" rx="5.7" ry="3.2" fill="#385a35"/>
<ellipse cx="120.5" cy="485.4" rx="4.7" ry="2.1" fill="#27422a"/>
<ellipse cx="120.5" cy="483.0" rx="4.5" ry="2.6" fill="#416640"/>
<ellipse cx="129.7" cy="486.3" rx="6.4" ry="2.7" fill="#27422a"/>
<ellipse cx="129.7" cy="483.4" rx="6.1" ry="3.3" fill="#4a7042"/>
<ellipse cx="137.6" cy="484.2" rx="5.3" ry="2.4" fill="#27422a"/>
<ellipse cx="137.6" cy="481.4" rx="5.0" ry="3.1" fill="#3a5d36"/>
<ellipse cx="145.5" cy="483.9" rx="5.7" ry="2.6" fill="#27422a"/>
<ellipse cx="145.5" cy="480.9" rx="5.5" ry="3.3" fill="#385a35"/>
<ellipse cx="156.1" cy="485.5" rx="5.7" ry="2.2" fill="#27422a"/>
<ellipse cx="156.1" cy="483.0" rx="5.4" ry="2.7" fill="#4a7042"/>
<ellipse cx="165.9" cy="484.1" rx="4.9" ry="1.9" fill="#27422a"/>
<ellipse cx="165.9" cy="481.9" rx="4.7" ry="2.4" fill="#3f6339"/>
<ellipse cx="176.2" cy="486.2" rx="5.8" ry="2.8" fill="#27422a"/>
<ellipse cx="176.2" cy="483.1" rx="5.6" ry="3.5" fill="#45693d"/>
<ellipse cx="184.8" cy="484.2" rx="5.5" ry="2.3" fill="#27422a"/>
<ellipse cx="184.8" cy="481.6" rx="5.2" ry="2.8" fill="#3a5d36"/>
<ellipse cx="194.8" cy="484.2" rx="4.5" ry="1.8" fill="#27422a"/>
<ellipse cx="194.8" cy="482.2" rx="4.3" ry="2.3" fill="#4a7042"/>
<ellipse cx="204.7" cy="484.7" rx="6.3" ry="2.8" fill="#27422a"/>
<ellipse cx="204.7" cy="481.5" rx="6.0" ry="3.5" fill="#385a35"/>
<ellipse cx="-2.0" cy="488.8" rx="5.8" ry="2.3" fill="#27422a"/>
<ellipse cx="-2.0" cy="486.2" rx="5.5" ry="2.9" fill="#385a35"/>
<ellipse cx="8.2" cy="489.3" rx="5.3" ry="2.5" fill="#27422a"/>
<ellipse cx="8.2" cy="486.5" rx="5.1" ry="3.2" fill="#416640"/>
<ellipse cx="18.3" cy="488.8" rx="4.5" ry="2.2" fill="#27422a"/>
<ellipse cx="18.3" cy="486.2" rx="4.3" ry="2.8" fill="#4a7042"/>
<ellipse cx="27.5" cy="489.3" rx="6.5" ry="2.8" fill="#27422a"/>
<ellipse cx="27.5" cy="486.2" rx="6.2" ry="3.5" fill="#416640"/>
<ellipse cx="35.9" cy="489.0" rx="4.8" ry="2.2" fill="#27422a"/>
<ellipse cx="35.9" cy="486.6" rx="4.5" ry="2.7" fill="#4a7042"/>
<ellipse cx="44.9" cy="489.3" rx="4.5" ry="1.9" fill="#27422a"/>
<ellipse cx="44.9" cy="487.2" rx="4.3" ry="2.4" fill="#385a35"/>
<ellipse cx="53.8" cy="491.1" rx="5.0" ry="2.5" fill="#27422a"/>
<ellipse cx="53.8" cy="488.3" rx="4.7" ry="3.1" fill="#416640"/>
<ellipse cx="61.8" cy="489.6" rx="5.2" ry="2.4" fill="#27422a"/>
<ellipse cx="61.8" cy="486.9" rx="5.0" ry="3.0" fill="#3f6339"/>
<ellipse cx="71.5" cy="489.0" rx="5.2" ry="2.1" fill="#27422a"/>
<ellipse cx="71.5" cy="486.6" rx="4.9" ry="2.7" fill="#3f6339"/>
<ellipse cx="81.4" cy="489.8" rx="6.1" ry="3.0" fill="#27422a"/>
<ellipse cx="81.4" cy="486.4" rx="5.8" ry="3.7" fill="#416640"/>
<ellipse cx="90.0" cy="490.6" rx="5.6" ry="2.5" fill="#27422a"/>
<ellipse cx="90.0" cy="487.8" rx="5.3" ry="3.1" fill="#45693d"/>
<ellipse cx="101.1" cy="490.7" rx="6.0" ry="2.9" fill="#27422a"/>
<ellipse cx="101.1" cy="487.5" rx="5.7" ry="3.6" fill="#45693d"/>
<ellipse cx="110.8" cy="489.1" rx="5.9" ry="2.8" fill="#27422a"/>
<ellipse cx="110.8" cy="486.0" rx="5.6" ry="3.5" fill="#45693d"/>
<ellipse cx="119.5" cy="490.5" rx="6.0" ry="2.5" fill="#27422a"/>
<ellipse cx="119.5" cy="487.7" rx="5.7" ry="3.1" fill="#3a5d36"/>
<ellipse cx="128.3" cy="491.4" rx="5.4" ry="2.5" fill="#27422a"/>
<ellipse cx="128.3" cy="488.6" rx="5.2" ry="3.2" fill="#45693d"/>
<ellipse cx="139.1" cy="490.4" rx="5.7" ry="2.5" fill="#27422a"/>
<ellipse cx="139.1" cy="487.6" rx="5.4" ry="3.2" fill="#3a5d36"/>
<ellipse cx="147.6" cy="491.2" rx="6.4" ry="2.7" fill="#27422a"/>
<ellipse cx="147.6" cy="488.2" rx="6.1" ry="3.4" fill="#45693d"/>
<ellipse cx="155.9" cy="491.2" rx="5.1" ry="2.5" fill="#27422a"/>
<ellipse cx="155.9" cy="488.4" rx="4.8" ry="3.1" fill="#45693d"/>
<ellipse cx="166.2" cy="489.5" rx="4.8" ry="2.2" fill="#27422a"/>
<ellipse cx="166.2" cy="487.0" rx="4.6" ry="2.7" fill="#3f6339"/>
<ellipse cx="175.6" cy="490.5" rx="6.2" ry="3.0" fill="#27422a"/>
<ellipse cx="175.6" cy="487.2" rx="5.9" ry="3.8" fill="#385a35"/>
<ellipse cx="184.0" cy="491.7" rx="6.3" ry="3.1" fill="#27422a"/>
<ellipse cx="184.0" cy="488.2" rx="6.0" ry="3.8" fill="#416640"/>
<ellipse cx="193.8" cy="490.4" rx="4.5" ry="1.8" fill="#27422a"/>
<ellipse cx="193.8" cy="488.4" rx="4.3" ry="2.3" fill="#4a7042"/>
<ellipse cx="201.8" cy="489.8" rx="4.7" ry="2.0" fill="#27422a"/>
<ellipse cx="201.8" cy="487.5" rx="4.5" ry="2.5" fill="#3a5d36"/>
<ellipse cx="-3.1" cy="494.9" rx="6.1" ry="2.3" fill="#27422a"/>
<ellipse cx="-3.1" cy="492.3" rx="5.8" ry="2.9" fill="#385a35"/>
<ellipse cx="7.7" cy="495.1" rx="5.7" ry="2.2" fill="#27422a"/>
<ellipse cx="7.7" cy="492.5" rx="5.5" ry="2.8" fill="#3a5d36"/>
<ellipse cx="17.2" cy="496.4" rx="6.2" ry="2.9" fill="#27422a"/>
<ellipse cx="17.2" cy="493.2" rx="5.9" ry="3.6" fill="#3a5d36"/>
<ellipse cx="27.0" cy="497.8" rx="6.5" ry="3.1" fill="#27422a"/>
<ellipse cx="27.0" cy="494.3" rx="6.2" ry="3.9" fill="#4a7042"/>
<ellipse cx="37.9" cy="494.3" rx="4.9" ry="2.4" fill="#27422a"/>
<ellipse cx="37.9" cy="491.7" rx="4.6" ry="3.0" fill="#3a5d36"/>
<ellipse cx="47.8" cy="495.7" rx="6.7" ry="2.8" fill="#27422a"/>
<ellipse cx="47.8" cy="492.6" rx="6.3" ry="3.5" fill="#3f6339"/>
<ellipse cx="57.0" cy="495.8" rx="5.6" ry="2.4" fill="#27422a"/>
<ellipse cx="57.0" cy="493.2" rx="5.3" ry="3.0" fill="#3a5d36"/>
<ellipse cx="67.6" cy="494.8" rx="5.9" ry="2.3" fill="#27422a"/>
<ellipse cx="67.6" cy="492.2" rx="5.7" ry="2.9" fill="#3f6339"/>
<ellipse cx="78.6" cy="495.7" rx="6.6" ry="3.2" fill="#27422a"/>
<ellipse cx="78.6" cy="492.0" rx="6.3" ry="4.1" fill="#4a7042"/>
<ellipse cx="89.0" cy="495.3" rx="5.1" ry="2.1" fill="#27422a"/>
<ellipse cx="89.0" cy="492.9" rx="4.9" ry="2.7" fill="#4a7042"/>
<ellipse cx="100.3" cy="497.5" rx="6.9" ry="3.2" fill="#27422a"/>
<ellipse cx="100.3" cy="494.0" rx="6.6" ry="4.0" fill="#385a35"/>
<ellipse cx="109.7" cy="495.6" rx="5.9" ry="2.4" fill="#27422a"/>
<ellipse cx="109.7" cy="493.0" rx="5.6" ry="2.9" fill="#385a35"/>
<ellipse cx="120.4" cy="496.0" rx="6.7" ry="2.6" fill="#27422a"/>
<ellipse cx="120.4" cy="493.0" rx="6.3" ry="3.3" fill="#45693d"/>
<ellipse cx="129.0" cy="495.8" rx="6.8" ry="2.6" fill="#27422a"/>
<ellipse cx="129.0" cy="492.9" rx="6.4" ry="3.2" fill="#45693d"/>
<ellipse cx="139.5" cy="493.8" rx="5.0" ry="2.1" fill="#27422a"/>
<ellipse cx="139.5" cy="491.4" rx="4.7" ry="2.7" fill="#4a7042"/>
<ellipse cx="150.4" cy="495.2" rx="5.4" ry="2.4" fill="#27422a"/>
<ellipse cx="150.4" cy="492.5" rx="5.1" ry="3.0" fill="#3f6339"/>
<ellipse cx="159.6" cy="495.2" rx="5.3" ry="2.2" fill="#27422a"/>
<ellipse cx="159.6" cy="492.7" rx="5.1" ry="2.8" fill="#45693d"/>
<ellipse cx="170.8" cy="496.8" rx="5.7" ry="2.3" fill="#27422a"/>
<ellipse cx="170.8" cy="494.2" rx="5.4" ry="2.9" fill="#3a5d36"/>
<ellipse cx="181.9" cy="495.6" rx="4.7" ry="2.0" fill="#27422a"/>
<ellipse cx="181.9" cy="493.4" rx="4.5" ry="2.5" fill="#3a5d36"/>
<ellipse cx="193.0" cy="494.5" rx="6.0" ry="2.8" fill="#27422a"/>
<ellipse cx="193.0" cy="491.4" rx="5.8" ry="3.5" fill="#416640"/>
<ellipse cx="201.8" cy="495.9" rx="5.0" ry="2.4" fill="#27422a"/>
<ellipse cx="201.8" cy="493.2" rx="4.8" ry="3.0" fill="#3f6339"/>
<ellipse cx="-4.6" cy="502.4" rx="5.4" ry="2.3" fill="#27422a"/>
<ellipse cx="-4.6" cy="499.8" rx="5.1" ry="2.9" fill="#45693d"/>
<ellipse cx="5.0" cy="503.0" rx="6.6" ry="2.8" fill="#27422a"/>
<ellipse cx="5.0" cy="499.8" rx="6.3" ry="3.5" fill="#45693d"/>
<ellipse cx="14.2" cy="500.8" rx="6.4" ry="2.6" fill="#27422a"/>
<ellipse cx="14.2" cy="497.8" rx="6.1" ry="3.2" fill="#45693d"/>
<ellipse cx="25.1" cy="500.9" rx="5.4" ry="2.2" fill="#27422a"/>
<ellipse cx="25.1" cy="498.4" rx="5.2" ry="2.8" fill="#385a35"/>
<ellipse cx="35.4" cy="500.6" rx="6.0" ry="2.9" fill="#27422a"/>
<ellipse cx="35.4" cy="497.3" rx="5.7" ry="3.7" fill="#45693d"/>
<ellipse cx="46.1" cy="500.5" rx="6.3" ry="2.4" fill="#27422a"/>
<ellipse cx="46.1" cy="497.8" rx="6.0" ry="3.1" fill="#3f6339"/>
<ellipse cx="56.0" cy="501.1" rx="6.0" ry="2.3" fill="#27422a"/>
<ellipse cx="56.0" cy="498.5" rx="5.7" ry="2.9" fill="#416640"/>
<ellipse cx="66.5" cy="501.4" rx="5.7" ry="2.6" fill="#27422a"/>
<ellipse cx="66.5" cy="498.5" rx="5.5" ry="3.2" fill="#45693d"/>
<ellipse cx="75.9" cy="501.7" rx="5.3" ry="2.2" fill="#27422a"/>
<ellipse cx="75.9" cy="499.2" rx="5.1" ry="2.7" fill="#416640"/>
<ellipse cx="84.5" cy="502.1" rx="5.1" ry="2.5" fill="#27422a"/>
<ellipse cx="84.5" cy="499.3" rx="4.9" ry="3.1" fill="#416640"/>
<ellipse cx="94.5" cy="502.3" rx="5.7" ry="2.8" fill="#27422a"/>
<ellipse cx="94.5" cy="499.2" rx="5.4" ry="3.4" fill="#4a7042"/>
<ellipse cx="103.2" cy="500.7" rx="6.6" ry="3.2" fill="#27422a"/>
<ellipse cx="103.2" cy="497.1" rx="6.3" ry="4.0" fill="#3a5d36"/>
<ellipse cx="113.9" cy="502.2" rx="6.0" ry="2.6" fill="#27422a"/>
<ellipse cx="113.9" cy="499.3" rx="5.7" ry="3.3" fill="#385a35"/>
<ellipse cx="124.7" cy="501.6" rx="7.0" ry="2.8" fill="#27422a"/>
<ellipse cx="124.7" cy="498.5" rx="6.7" ry="3.5" fill="#45693d"/>
<ellipse cx="133.5" cy="501.4" rx="6.3" ry="2.8" fill="#27422a"/>
<ellipse cx="133.5" cy="498.2" rx="6.0" ry="3.5" fill="#3a5d36"/>
<ellipse cx="144.6" cy="501.9" rx="5.3" ry="2.3" fill="#27422a"/>
<ellipse cx="144.6" cy="499.3" rx="5.0" ry="2.9" fill="#45693d"/>
<ellipse cx="156.0" cy="501.2" rx="5.4" ry="2.2" fill="#27422a"/>
<ellipse cx="156.0" cy="498.7" rx="5.1" ry="2.7" fill="#385a35"/>
<ellipse cx="164.6" cy="501.5" rx="6.8" ry="2.9" fill="#27422a"/>
<ellipse cx="164.6" cy="498.3" rx="6.5" ry="3.6" fill="#416640"/>
<ellipse cx="173.2" cy="501.2" rx="5.8" ry="2.5" fill="#27422a"/>
<ellipse cx="173.2" cy="498.4" rx="5.5" ry="3.1" fill="#3a5d36"/>
<ellipse cx="184.5" cy="499.3" rx="5.0" ry="2.0" fill="#27422a"/>
<ellipse cx="184.5" cy="497.0" rx="4.8" ry="2.5" fill="#385a35"/>
<ellipse cx="194.8" cy="501.7" rx="5.3" ry="2.1" fill="#27422a"/>
<ellipse cx="194.8" cy="499.3" rx="5.1" ry="2.6" fill="#3a5d36"/>
<ellipse cx="204.7" cy="502.5" rx="6.7" ry="3.1" fill="#27422a"/>
<ellipse cx="204.7" cy="499.0" rx="6.4" ry="3.9" fill="#3a5d36"/>
<ellipse cx="-3.8" cy="507.2" rx="5.8" ry="2.4" fill="#27422a"/>
<ellipse cx="-3.8" cy="504.5" rx="5.6" ry="3.0" fill="#4a7042"/>
<ellipse cx="7.4" cy="508.5" rx="6.8" ry="2.7" fill="#27422a"/>
<ellipse cx="7.4" cy="505.5" rx="6.5" ry="3.3" fill="#4a7042"/>
<ellipse cx="17.8" cy="508.7" rx="6.6" ry="3.3" fill="#27422a"/>
<ellipse cx="17.8" cy="505.1" rx="6.3" ry="4.1" fill="#45693d"/>
<ellipse cx="28.3" cy="508.5" rx="7.3" ry="2.9" fill="#27422a"/>
<ellipse cx="28.3" cy="505.3" rx="7.0" ry="3.6" fill="#4a7042"/>
<ellipse cx="38.9" cy="508.3" rx="4.9" ry="2.1" fill="#27422a"/>
<ellipse cx="38.9" cy="505.9" rx="4.7" ry="2.6" fill="#416640"/>
<ellipse cx="48.1" cy="506.9" rx="5.6" ry="2.4" fill="#27422a"/>
<ellipse cx="48.1" cy="504.2" rx="5.4" ry="3.0" fill="#3f6339"/>
<ellipse cx="60.3" cy="508.7" rx="6.7" ry="3.3" fill="#27422a"/>
<ellipse cx="60.3" cy="505.0" rx="6.3" ry="4.1" fill="#416640"/>
<ellipse cx="69.9" cy="506.6" rx="6.3" ry="2.6" fill="#27422a"/>
<ellipse cx="69.9" cy="503.7" rx="6.0" ry="3.2" fill="#4a7042"/>
<ellipse cx="78.9" cy="506.8" rx="5.7" ry="2.8" fill="#27422a"/>
<ellipse cx="78.9" cy="503.7" rx="5.4" ry="3.5" fill="#416640"/>
<ellipse cx="88.4" cy="507.0" rx="6.3" ry="3.1" fill="#27422a"/>
<ellipse cx="88.4" cy="503.5" rx="6.0" ry="3.9" fill="#385a35"/>
<ellipse cx="98.4" cy="508.6" rx="7.0" ry="3.2" fill="#27422a"/>
<ellipse cx="98.4" cy="505.1" rx="6.7" ry="3.9" fill="#45693d"/>
<ellipse cx="108.8" cy="507.5" rx="7.0" ry="3.0" fill="#27422a"/>
<ellipse cx="108.8" cy="504.2" rx="6.6" ry="3.7" fill="#3f6339"/>
<ellipse cx="118.3" cy="506.7" rx="5.4" ry="2.4" fill="#27422a"/>
<ellipse cx="118.3" cy="504.0" rx="5.1" ry="3.0" fill="#45693d"/>
<ellipse cx="128.8" cy="507.5" rx="6.4" ry="3.0" fill="#27422a"/>
<ellipse cx="128.8" cy="504.2" rx="6.1" ry="3.7" fill="#4a7042"/>
<ellipse cx="139.1" cy="509.5" rx="6.6" ry="3.2" fill="#27422a"/>
<ellipse cx="139.1" cy="506.0" rx="6.3" ry="3.9" fill="#45693d"/>
<ellipse cx="149.7" cy="506.6" rx="5.0" ry="2.1" fill="#27422a"/>
<ellipse cx="149.7" cy="504.2" rx="4.8" ry="2.6" fill="#3a5d36"/>
<ellipse cx="160.7" cy="507.9" rx="6.7" ry="3.0" fill="#27422a"/>
<ellipse cx="160.7" cy="504.5" rx="6.4" ry="3.7" fill="#416640"/>
<ellipse cx="172.7" cy="507.8" rx="5.6" ry="2.4" fill="#27422a"/>
<ellipse cx="172.7" cy="505.1" rx="5.3" ry="2.9" fill="#45693d"/>
<ellipse cx="184.0" cy="507.7" rx="5.2" ry="2.1" fill="#27422a"/>
<ellipse cx="184.0" cy="505.3" rx="5.0" ry="2.7" fill="#3f6339"/>
<ellipse cx="192.8" cy="506.5" rx="5.9" ry="2.3" fill="#27422a"/>
<ellipse cx="192.8" cy="504.0" rx="5.6" ry="2.9" fill="#4a7042"/>
<ellipse cx="202.7" cy="508.0" rx="6.2" ry="2.4" fill="#27422a"/>
<ellipse cx="202.7" cy="505.3" rx="5.9" ry="3.0" fill="#4a7042"/>
<ellipse cx="-1.1" cy="513.3" rx="5.4" ry="2.2" fill="#27422a"/>
<ellipse cx="-1.1" cy="510.8" rx="5.1" ry="2.7" fill="#4a7042"/>
<ellipse cx="9.5" cy="513.7" rx="5.4" ry="2.5" fill="#27422a"/>
<ellipse cx="9.5" cy="510.9" rx="5.2" ry="3.1" fill="#3a5d36"/>
<ellipse cx="19.7" cy="513.9" rx="6.0" ry="2.9" fill="#27422a"/>
<ellipse cx="19.7" cy="510.6" rx="5.7" ry="3.6" fill="#3a5d36"/>
<ellipse cx="30.7" cy="513.3" rx="5.4" ry="2.4" fill="#27422a"/>
<ellipse cx="30.7" cy="510.6" rx="5.2" ry="3.0" fill="#3a5d36"/>
<ellipse cx="40.6" cy="512.8" rx="6.0" ry="2.4" fill="#27422a"/>
<ellipse cx="40.6" cy="510.1" rx="5.7" ry="3.0" fill="#3f6339"/>
<ellipse cx="52.7" cy="514.2" rx="6.3" ry="2.4" fill="#27422a"/>
<ellipse cx="52.7" cy="511.5" rx="6.0" ry="3.0" fill="#385a35"/>
<ellipse cx="62.9" cy="514.6" rx="7.4" ry="3.0" fill="#27422a"/>
<ellipse cx="62.9" cy="511.3" rx="7.1" ry="3.8" fill="#385a35"/>
<ellipse cx="73.2" cy="513.0" rx="7.0" ry="3.0" fill="#27422a"/>
<ellipse cx="73.2" cy="509.6" rx="6.7" ry="3.7" fill="#385a35"/>
<ellipse cx="83.2" cy="514.3" rx="5.4" ry="2.4" fill="#27422a"/>
<ellipse cx="83.2" cy="511.6" rx="5.1" ry="2.9" fill="#4a7042"/>
<ellipse cx="93.7" cy="513.2" rx="6.3" ry="2.6" fill="#27422a"/>
<ellipse cx="93.7" cy="510.2" rx="6.0" ry="3.3" fill="#45693d"/>
<ellipse cx="106.1" cy="513.2" rx="7.0" ry="3.0" fill="#27422a"/>
<ellipse cx="106.1" cy="509.9" rx="6.7" ry="3.7" fill="#385a35"/>
<ellipse cx="116.1" cy="512.4" rx="5.9" ry="2.6" fill="#27422a"/>
<ellipse cx="116.1" cy="509.5" rx="5.7" ry="3.2" fill="#45693d"/>
<ellipse cx="126.9" cy="513.4" rx="7.2" ry="3.0" fill="#27422a"/>
<ellipse cx="126.9" cy="510.0" rx="6.9" ry="3.8" fill="#3f6339"/>
<ellipse cx="139.2" cy="513.6" rx="7.4" ry="3.6" fill="#27422a"/>
<ellipse cx="139.2" cy="509.6" rx="7.0" ry="4.5" fill="#3a5d36"/>
<ellipse cx="148.5" cy="513.9" rx="6.6" ry="2.9" fill="#27422a"/>
<ellipse cx="148.5" cy="510.7" rx="6.3" ry="3.6" fill="#3a5d36"/>
<ellipse cx="160.8" cy="511.9" rx="5.2" ry="2.2" fill="#27422a"/>
<ellipse cx="160.8" cy="509.5" rx="4.9" ry="2.7" fill="#3a5d36"/>
<ellipse cx="171.9" cy="513.1" rx="6.8" ry="2.7" fill="#27422a"/>
<ellipse cx="171.9" cy="510.0" rx="6.5" ry="3.4" fill="#4a7042"/>
<ellipse cx="182.3" cy="513.5" rx="7.4" ry="2.8" fill="#27422a"/>
<ellipse cx="182.3" cy="510.3" rx="7.0" ry="3.5" fill="#385a35"/>
<ellipse cx="194.8" cy="515.0" rx="6.7" ry="3.0" fill="#27422a"/>
<ellipse cx="194.8" cy="511.6" rx="6.4" ry="3.8" fill="#4a7042"/>
<ellipse cx="-0.4" cy="520.0" rx="6.4" ry="3.2" fill="#27422a"/>
<ellipse cx="-0.4" cy="516.5" rx="6.1" ry="3.9" fill="#4a7042"/>
<ellipse cx="9.1" cy="518.6" rx="6.6" ry="2.7" fill="#27422a"/>
<ellipse cx="9.1" cy="515.5" rx="6.3" ry="3.4" fill="#3a5d36"/>
<ellipse cx="20.2" cy="518.3" rx="6.8" ry="2.8" fill="#27422a"/>
<ellipse cx="20.2" cy="515.2" rx="6.5" ry="3.5" fill="#3a5d36"/>
<ellipse cx="32.1" cy="518.4" rx="5.2" ry="2.3" fill="#27422a"/>
<ellipse cx="32.1" cy="515.8" rx="5.0" ry="2.9" fill="#4a7042"/>
<ellipse cx="41.5" cy="520.7" rx="7.5" ry="3.5" fill="#27422a"/>
<ellipse cx="41.5" cy="516.7" rx="7.1" ry="4.4" fill="#3f6339"/>
<ellipse cx="53.2" cy="520.9" rx="7.4" ry="3.6" fill="#27422a"/>
<ellipse cx="53.2" cy="516.8" rx="7.1" ry="4.6" fill="#3a5d36"/>
<ellipse cx="63.5" cy="518.2" rx="5.3" ry="2.5" fill="#27422a"/>
<ellipse cx="63.5" cy="515.4" rx="5.0" ry="3.1" fill="#45693d"/>
<ellipse cx="75.5" cy="521.3" rx="7.8" ry="3.7" fill="#27422a"/>
<ellipse cx="75.5" cy="517.1" rx="7.4" ry="4.6" fill="#45693d"/>
<ellipse cx="86.1" cy="520.6" rx="7.3" ry="3.0" fill="#27422a"/>
<ellipse cx="86.1" cy="517.2" rx="7.0" ry="3.8" fill="#4a7042"/>
<ellipse cx="96.5" cy="520.4" rx="6.6" ry="2.7" fill="#27422a"/>
<ellipse cx="96.5" cy="517.3" rx="6.3" ry="3.4" fill="#45693d"/>
<ellipse cx="107.2" cy="521.2" rx="7.6" ry="3.6" fill="#27422a"/>
<ellipse cx="107.2" cy="517.2" rx="7.3" ry="4.4" fill="#3f6339"/>
<ellipse cx="120.2" cy="521.1" rx="7.6" ry="3.1" fill="#27422a"/>
<ellipse cx="120.2" cy="517.5" rx="7.2" ry="3.9" fill="#4a7042"/>
<ellipse cx="131.5" cy="519.8" rx="5.3" ry="2.4" fill="#27422a"/>
<ellipse cx="131.5" cy="517.1" rx="5.1" ry="3.0" fill="#4a7042"/>
<ellipse cx="144.1" cy="518.2" rx="5.9" ry="2.6" fill="#27422a"/>
<ellipse cx="144.1" cy="515.2" rx="5.6" ry="3.2" fill="#385a35"/>
<ellipse cx="155.0" cy="520.3" rx="5.9" ry="2.7" fill="#27422a"/>
<ellipse cx="155.0" cy="517.2" rx="5.6" ry="3.4" fill="#3a5d36"/>
<ellipse cx="165.0" cy="520.6" rx="5.8" ry="2.6" fill="#27422a"/>
<ellipse cx="165.0" cy="517.7" rx="5.5" ry="3.2" fill="#45693d"/>
<ellipse cx="176.5" cy="520.0" rx="7.1" ry="3.2" fill="#27422a"/>
<ellipse cx="176.5" cy="516.3" rx="6.8" ry="4.0" fill="#3a5d36"/>
<ellipse cx="188.8" cy="518.7" rx="6.2" ry="2.8" fill="#27422a"/>
<ellipse cx="188.8" cy="515.5" rx="5.9" ry="3.6" fill="#45693d"/>
<ellipse cx="200.6" cy="521.4" rx="6.5" ry="3.0" fill="#27422a"/>
<ellipse cx="200.6" cy="518.0" rx="6.2" ry="3.7" fill="#45693d"/>
<ellipse cx="-1.6" cy="526.8" rx="6.5" ry="3.0" fill="#27422a"/>
<ellipse cx="-1.6" cy="523.4" rx="6.2" ry="3.7" fill="#45693d"/>
<ellipse cx="8.2" cy="526.1" rx="5.7" ry="2.2" fill="#27422a"/>
<ellipse cx="8.2" cy="523.6" rx="5.5" ry="2.8" fill="#3a5d36"/>
<ellipse cx="19.3" cy="526.7" rx="7.6" ry="3.2" fill="#27422a"/>
<ellipse cx="19.3" cy="523.1" rx="7.2" ry="4.0" fill="#3f6339"/>
<ellipse cx="32.2" cy="526.6" rx="5.9" ry="2.3" fill="#27422a"/>
<ellipse cx="32.2" cy="524.0" rx="5.6" ry="2.9" fill="#4a7042"/>
<ellipse cx="44.9" cy="526.9" rx="6.2" ry="2.6" fill="#27422a"/>
<ellipse cx="44.9" cy="524.0" rx="5.9" ry="3.3" fill="#416640"/>
<ellipse cx="56.2" cy="525.5" rx="7.0" ry="3.2" fill="#27422a"/>
<ellipse cx="56.2" cy="521.9" rx="6.6" ry="4.0" fill="#45693d"/>
<ellipse cx="67.9" cy="526.5" rx="5.8" ry="2.3" fill="#27422a"/>
<ellipse cx="67.9" cy="523.8" rx="5.5" ry="2.9" fill="#3f6339"/>
<ellipse cx="79.8" cy="527.9" rx="7.8" ry="3.4" fill="#27422a"/>
<ellipse cx="79.8" cy="524.1" rx="7.4" ry="4.2" fill="#45693d"/>
<ellipse cx="90.7" cy="524.6" rx="6.9" ry="2.8" fill="#27422a"/>
<ellipse cx="90.7" cy="521.5" rx="6.6" ry="3.4" fill="#385a35"/>
<ellipse cx="101.9" cy="525.0" rx="5.6" ry="2.3" fill="#27422a"/>
<ellipse cx="101.9" cy="522.4" rx="5.4" ry="2.8" fill="#416640"/>
<ellipse cx="112.6" cy="524.6" rx="5.6" ry="2.7" fill="#27422a"/>
<ellipse cx="112.6" cy="521.6" rx="5.3" ry="3.4" fill="#3a5d36"/>
<ellipse cx="124.8" cy="524.3" rx="6.3" ry="2.5" fill="#27422a"/>
<ellipse cx="124.8" cy="521.4" rx="6.0" ry="3.1" fill="#45693d"/>
<ellipse cx="138.3" cy="525.3" rx="5.5" ry="2.3" fill="#27422a"/>
<ellipse cx="138.3" cy="522.7" rx="5.2" ry="2.9" fill="#416640"/>
<ellipse cx="149.5" cy="525.1" rx="6.9" ry="3.1" fill="#27422a"/>
<ellipse cx="149.5" cy="521.6" rx="6.6" ry="3.9" fill="#416640"/>
<ellipse cx="160.1" cy="524.9" rx="6.2" ry="2.5" fill="#27422a"/>
<ellipse cx="160.1" cy="522.0" rx="5.9" ry="3.2" fill="#4a7042"/>
<ellipse cx="172.0" cy="527.2" rx="5.5" ry="2.7" fill="#27422a"/>
<ellipse cx="172.0" cy="524.3" rx="5.3" ry="3.3" fill="#45693d"/>
<ellipse cx="183.8" cy="526.1" rx="6.1" ry="2.4" fill="#27422a"/>
<ellipse cx="183.8" cy="523.5" rx="5.9" ry="2.9" fill="#416640"/>
<ellipse cx="194.6" cy="525.5" rx="5.4" ry="2.2" fill="#27422a"/>
<ellipse cx="194.6" cy="523.0" rx="5.2" ry="2.8" fill="#3a5d36"/>
<ellipse cx="204.3" cy="527.1" rx="7.6" ry="3.6" fill="#27422a"/>
<ellipse cx="204.3" cy="523.0" rx="7.2" ry="4.5" fill="#385a35"/>
<ellipse cx="-3.5" cy="534.2" rx="7.8" ry="3.7" fill="#27422a"/>
<ellipse cx="-3.5" cy="530.1" rx="7.5" ry="4.6" fill="#4a7042"/>
<ellipse cx="8.1" cy="533.6" rx="6.3" ry="3.1" fill="#27422a"/>
<ellipse cx="8.1" cy="530.2" rx="6.0" ry="3.8" fill="#3f6339"/>
<ellipse cx="18.1" cy="531.9" rx="6.5" ry="3.0" fill="#27422a"/>
<ellipse cx="18.1" cy="528.5" rx="6.2" ry="3.8" fill="#416640"/>
<ellipse cx="30.7" cy="533.9" rx="6.6" ry="3.0" fill="#27422a"/>
<ellipse cx="30.7" cy="530.5" rx="6.3" ry="3.8" fill="#3a5d36"/>
<ellipse cx="41.9" cy="532.0" rx="7.4" ry="3.3" fill="#27422a"/>
<ellipse cx="41.9" cy="528.3" rx="7.1" ry="4.2" fill="#3a5d36"/>
<ellipse cx="53.3" cy="533.5" rx="6.2" ry="2.9" fill="#27422a"/>
<ellipse cx="53.3" cy="530.3" rx="5.9" ry="3.6" fill="#416640"/>
<ellipse cx="64.5" cy="531.6" rx="6.6" ry="2.6" fill="#27422a"/>
<ellipse cx="64.5" cy="528.7" rx="6.3" ry="3.3" fill="#3a5d36"/>
<ellipse cx="75.9" cy="532.1" rx="5.6" ry="2.5" fill="#27422a"/>
<ellipse cx="75.9" cy="529.3" rx="5.4" ry="3.1" fill="#4a7042"/>
<ellipse cx="86.2" cy="535.1" rx="7.9" ry="3.7" fill="#27422a"/>
<ellipse cx="86.2" cy="530.9" rx="7.6" ry="4.6" fill="#3f6339"/>
<ellipse cx="99.7" cy="532.4" rx="7.7" ry="3.0" fill="#27422a"/>
<ellipse cx="99.7" cy="529.0" rx="7.3" ry="3.8" fill="#3a5d36"/>
<ellipse cx="111.4" cy="533.9" rx="6.2" ry="2.7" fill="#27422a"/>
<ellipse cx="111.4" cy="530.9" rx="5.9" ry="3.3" fill="#385a35"/>
<ellipse cx="125.0" cy="533.3" rx="5.8" ry="2.5" fill="#27422a"/>
<ellipse cx="125.0" cy="530.5" rx="5.5" ry="3.1" fill="#3a5d36"/>
<ellipse cx="138.5" cy="533.4" rx="7.1" ry="2.7" fill="#27422a"/>
<ellipse cx="138.5" cy="530.4" rx="6.7" ry="3.4" fill="#385a35"/>
<ellipse cx="151.0" cy="532.6" rx="7.4" ry="3.0" fill="#27422a"/>
<ellipse cx="151.0" cy="529.2" rx="7.0" ry="3.7" fill="#416640"/>
<ellipse cx="162.4" cy="533.0" rx="7.6" ry="3.3" fill="#27422a"/>
<ellipse cx="162.4" cy="529.4" rx="7.2" ry="4.1" fill="#416640"/>
<ellipse cx="176.1" cy="532.4" rx="7.7" ry="3.6" fill="#27422a"/>
<ellipse cx="176.1" cy="528.4" rx="7.3" ry="4.5" fill="#4a7042"/>
<ellipse cx="188.7" cy="532.4" rx="6.7" ry="2.7" fill="#27422a"/>
<ellipse cx="188.7" cy="529.3" rx="6.4" ry="3.4" fill="#416640"/>
<ellipse cx="200.9" cy="532.2" rx="8.2" ry="3.6" fill="#27422a"/>
<ellipse cx="200.9" cy="528.2" rx="7.8" ry="4.5" fill="#4a7042"/>
<ellipse cx="-4.1" cy="541.2" rx="6.2" ry="2.7" fill="#27422a"/>
<ellipse cx="-4.1" cy="538.2" rx="5.9" ry="3.4" fill="#3a5d36"/>
<ellipse cx="9.3" cy="540.7" rx="7.9" ry="3.9" fill="#27422a"/>
<ellipse cx="9.3" cy="536.3" rx="7.6" ry="4.9" fill="#4a7042"/>
<ellipse cx="19.9" cy="542.6" rx="8.0" ry="3.9" fill="#27422a"/>
<ellipse cx="19.9" cy="538.3" rx="7.6" ry="4.8" fill="#3f6339"/>
<ellipse cx="31.2" cy="542.1" rx="7.7" ry="3.7" fill="#27422a"/>
<ellipse cx="31.2" cy="537.9" rx="7.3" ry="4.7" fill="#3f6339"/>
<ellipse cx="44.8" cy="540.7" rx="8.7" ry="3.4" fill="#27422a"/>
<ellipse cx="44.8" cy="536.9" rx="8.3" ry="4.2" fill="#3f6339"/>
<ellipse cx="58.1" cy="540.1" rx="8.1" ry="3.5" fill="#27422a"/>
<ellipse cx="58.1" cy="536.1" rx="7.7" ry="4.4" fill="#416640"/>
<ellipse cx="68.5" cy="540.6" rx="7.2" ry="3.5" fill="#27422a"/>
<ellipse cx="68.5" cy="536.6" rx="6.9" ry="4.4" fill="#45693d"/>
<ellipse cx="79.2" cy="541.0" rx="8.1" ry="3.5" fill="#27422a"/>
<ellipse cx="79.2" cy="537.0" rx="7.7" ry="4.4" fill="#45693d"/>
<ellipse cx="89.8" cy="540.1" rx="6.0" ry="2.9" fill="#27422a"/>
<ellipse cx="89.8" cy="536.9" rx="5.7" ry="3.6" fill="#3f6339"/>
<ellipse cx="103.5" cy="538.8" rx="6.9" ry="2.7" fill="#27422a"/>
<ellipse cx="103.5" cy="535.8" rx="6.5" ry="3.4" fill="#3f6339"/>
<ellipse cx="117.7" cy="541.2" rx="6.4" ry="2.7" fill="#27422a"/>
<ellipse cx="117.7" cy="538.2" rx="6.1" ry="3.3" fill="#4a7042"/>
<ellipse cx="128.8" cy="540.7" rx="8.3" ry="3.7" fill="#27422a"/>
<ellipse cx="128.8" cy="536.5" rx="7.9" ry="4.7" fill="#4a7042"/>
<ellipse cx="139.4" cy="541.6" rx="6.4" ry="2.9" fill="#27422a"/>
<ellipse cx="139.4" cy="538.3" rx="6.1" ry="3.6" fill="#385a35"/>
<ellipse cx="153.8" cy="541.2" rx="8.7" ry="3.7" fill="#27422a"/>
<ellipse cx="153.8" cy="537.0" rx="8.3" ry="4.6" fill="#3a5d36"/>
<ellipse cx="167.0" cy="542.3" rx="8.5" ry="3.9" fill="#27422a"/>
<ellipse cx="167.0" cy="537.9" rx="8.1" ry="4.9" fill="#45693d"/>
<ellipse cx="180.2" cy="539.1" rx="6.2" ry="2.8" fill="#27422a"/>
<ellipse cx="180.2" cy="535.9" rx="5.9" ry="3.5" fill="#4a7042"/>
<ellipse cx="190.7" cy="539.3" rx="6.5" ry="2.7" fill="#27422a"/>
<ellipse cx="190.7" cy="536.2" rx="6.2" ry="3.4" fill="#416640"/>
<ellipse cx="202.6" cy="540.4" rx="8.7" ry="4.0" fill="#27422a"/>
<ellipse cx="202.6" cy="536.0" rx="8.3" ry="5.0" fill="#385a35"/>
</g>
<g filter="url(#bl2)"><g fill="#5a8447" fill-opacity=".7"><ellipse cx="60" cy="513" rx="26" ry="3"/><ellipse cx="20" cy="520" rx="14" ry="2.500"/></g></g>
<!-- canopy supports -->
<g stroke="#c9d2c0" stroke-width=".8" fill="none" opacity=".9"><path d="M150 442 L156 476 L162 444 L168 476 L174 448 M178 450 L184 476 L190 452 L196 476 L199 456"/><path d="M153 442 L159 476 M165 446 L171 476 M181 452 L187 476 M193 454 L198 476"/></g>
<!-- canopy -->
<path d="M115.5 409 Q150 428 199 437.5 L199 452 Q148 443 120 421 Q116 415 115.5 409Z" fill="#b7ab95"/>
<path d="M115.5 409 Q150 428 199 437.5 L199 452 Q148 443 120 421 Q116 415 115.5 409Z" fill="url(#tri)"/>
<path d="M120 421 Q148 443 199 452 L199 455 Q146 446 119 422Z" fill="#6f675c"/>
<!-- white building -->
<rect x="127" y="477.5" width="72" height="54" fill="#dcdcd4"/>
<rect x="127" y="476" width="72" height="2" fill="#8c9a78"/>
<g fill="#878f9b"><rect x="128.500" y="484" width="53" height="5.500"/><rect x="128.500" y="495.500" width="53" height="5.500"/><rect x="128.500" y="507" width="53" height="5.500"/><rect x="128.500" y="518.500" width="53" height="5.500"/></g>
<g fill="#5a6674"><rect x="183" y="483" width="16" height="8"/><rect x="183" y="494.500" width="16" height="8"/><rect x="183" y="506" width="16" height="8"/><rect x="183" y="517.500" width="16" height="8"/></g>
<rect x="0" y="440" width="199" height="97" fill="url(#fogL)"/>
</g>
<g id="right">
<!-- distant small -->
<rect x="1049" y="413" width="13" height="18" fill="#dbe3e3"/>
<rect x="1034" y="426" width="14" height="24" fill="#bccfb2"/><rect x="1048" y="428" width="4" height="22" fill="#3f66a8"/><rect x="1052" y="427" width="13" height="23" fill="#c3d3bb"/>
<rect x="1060" y="428" width="20" height="24" fill="#8ca4a2"/>
<!-- teal tower -->
<rect x="1065" y="322" width="15" height="108" fill="#5aa4bc"/>
<rect x="1065" y="322" width="15" height="108" fill="url(#hs)"/>
<rect x="1064" y="314" width="16" height="10" fill="#4a5a66"/><ellipse cx="1078" cy="313" rx="7" ry="1.6" fill="#2e3a44"/>
<rect x="1065" y="333" width="15" height="3" fill="#7a8a84"/>
<!-- flared tower -->
<path d="M1001 338 L1034 337 L1029 346 L1028 352 L1033 445 L1005 445 L1007 352 L1007 346Z" fill="#a6cde4"/>
<path d="M1001 338 L1034 337 L1029 346 L1007 346Z" fill="#a9cfe2"/><path d="M1001 338 L1034 337" stroke="#8fb4c8" stroke-width=".8"/><path d="M1014 338 L1017.500 345 L1021 338Z" fill="#7fa8c0"/>
<rect x="1012" y="345" width="11" height="9" fill="#55606a"/><circle cx="1009.500" cy="349.500" r="2.300" fill="#d4506a"/><circle cx="1025.500" cy="349.500" r="2.300" fill="#d4506a"/>
<path d="M1007 355 L1028 355 L1033 445 L1005 445Z" fill="url(#hs)"/>
<path d="M1019 355 L1028 355 L1033 445 L1021 445Z" fill="#7fb4d6" fill-opacity=".6"/>
<path d="M1006 400 L1030.500 400 L1033 445 L1005 445Z" fill="#5f88b4" fill-opacity=".55"/>
<!-- gray bldg -->
<rect x="987" y="387" width="12.500" height="66" fill="#5b73aa"/><rect x="999.500" y="387" width="21.500" height="66" fill="#99a0ac"/>
<rect x="987" y="387" width="34" height="3" fill="#3a4458"/><rect x="987" y="387" width="34" height="66" fill="url(#hsd)"/>
<!-- brown -->
<rect x="941" y="392" width="12" height="42" fill="#a28668"/><rect x="941" y="392" width="12" height="42" fill="url(#hsd)"/>
<!-- rounded tower -->
<path d="M953 331 Q953 328.500 956 328.500 L960 328.500 Q960 327.300 963 327.300 L982 327.300 Q985 327.300 985 331 L985 455 L953 455Z" fill="url(#b2)"/>
<rect x="953" y="330" width="32" height="125" fill="url(#hs)"/>
<!-- ping an -->
<path d="M896.400 135 L896.800 98 L897.200 135Z" stroke="#eef2f6" stroke-width="1" fill="#eef2f6"/>
<path d="M896.800 128 Q897.500 137 900.500 141 Q906 152 908.500 163 Q911.500 178 912.500 200 Q914 240 914 300 L914.500 440 L882 440 L882 300 Q882 215 884 183 Q886 163 889.500 152 Q892.500 142 895 138 Q896.500 134 896.800 128Z" fill="#d8dde5"/>
<path d="M897 139 Q903 150 906 163 Q908 180 908.500 200 L909.500 440 L895 440 L893 200 Q892.500 178 893 163 Q894 150 897 139Z" fill="url(#paC)"/>
<path d="M884 185 Q886 163 889.500 152 Q892.500 142 895 138 L899 139.500 Q906 152 908.500 163 Q911.500 178 912.500 200 L914 300 L914.500 440 L882 440 L882 300Z" fill="url(#hsd)" opacity=".85"/>
<path d="M882 300 Q882 215 884 183 Q886 163 889.500 152 Q892.500 142 895 138" stroke="#f6f8fa" stroke-width="1.200" fill="none"/>
<path d="M897 139 Q894 150 893 163 Q892.500 178 893 200 L895 440" stroke="#f6f8fa" stroke-width="1.100" fill="none"/>
<path d="M897 139 Q903 150 906 163 Q908 180 908.500 200 L909.500 440" stroke="#f2f5f8" stroke-width="1" fill="none"/>
<path d="M900.500 141 Q906 152 908.500 163 Q911.500 178 912.500 200 Q914 240 914 300 L914.500 440" stroke="#eef1f5" stroke-width="1" fill="none"/>
<g fill="#8c96a8" fill-opacity=".75"><rect x="884" y="215" width="8" height="2"/><rect x="883" y="262" width="10" height="2"/><rect x="883" y="308" width="11" height="2"/><rect x="883" y="352" width="11" height="2"/></g>
<g fill="#d9d4c4"><rect x="894" y="236" width="14" height="2.200"/><rect x="894.500" y="282" width="14" height="2.200"/><rect x="895" y="328" width="14" height="2.200"/><rect x="895" y="372" width="14" height="2.200"/></g>
<ellipse cx="895.500" cy="182" rx="2.600" ry="10" fill="#fff4d8" filter="url(#bl2)"/>
<rect x="882.500" y="300" width="10.500" height="140" fill="url(#paD)"/><rect x="909.500" y="300" width="4.500" height="140" fill="url(#paD)"/><rect x="895.500" y="300" width="13.500" height="140" fill="url(#paD)" opacity=".45"/>
<rect x="882" y="380" width="6.500" height="60" fill="#2d5aa6"/>
<!-- glass under canopy -->
<rect x="882" y="440" width="112" height="40" fill="#76828f"/>
<rect x="900" y="456" width="60" height="8" fill="#93a6c4" fill-opacity=".7"/>
<rect x="882" y="452" width="16" height="26" fill="#1c2740"/>
<rect x="975" y="437" width="47" height="16" fill="#587596"/><rect x="975" y="453" width="47" height="24" fill="#3a5040"/>
<rect x="1021" y="430" width="10" height="24" fill="#3c4c68"/>
<rect x="1033" y="447" width="30" height="10" fill="#a9c0d8"/>
<!-- trees right -->
<path d="M990 462 Q996 454 1004 456 Q1012 450 1020 455 Q1034 449 1046 455 Q1060 451 1083 456 L1083 540 L990 540Z" fill="#2f552a"/>
<g filter="url(#bl2)">
<g fill="#55983a"><ellipse cx="1040" cy="511" rx="38" ry="4.500"/><ellipse cx="1015" cy="530" rx="20" ry="5"/><ellipse cx="1074" cy="500" rx="8" ry="3"/></g>
</g>
<g filter="url(#bl3)">
<ellipse cx="1000.4" cy="456.7" rx="3.8" ry="1.9" fill="#24461f"/>
<ellipse cx="1000.4" cy="454.5" rx="3.6" ry="2.3" fill="#36602c"/>
<ellipse cx="1007.1" cy="457.2" rx="4.1" ry="1.6" fill="#24461f"/>
<ellipse cx="1007.1" cy="455.4" rx="3.9" ry="2.0" fill="#4b7d3a"/>
<ellipse cx="1013.7" cy="454.6" rx="3.6" ry="1.5" fill="#24461f"/>
<ellipse cx="1013.7" cy="453.0" rx="3.4" ry="1.9" fill="#41703a"/>
<ellipse cx="1021.4" cy="456.4" rx="4.7" ry="1.8" fill="#24461f"/>
<ellipse cx="1021.4" cy="454.3" rx="4.5" ry="2.3" fill="#39652c"/>
<ellipse cx="1029.6" cy="455.9" rx="4.0" ry="1.8" fill="#24461f"/>
<ellipse cx="1029.6" cy="454.0" rx="3.8" ry="2.2" fill="#36602c"/>
<ellipse cx="1036.2" cy="456.1" rx="5.1" ry="2.5" fill="#24461f"/>
<ellipse cx="1036.2" cy="453.3" rx="4.9" ry="3.1" fill="#39652c"/>
<ellipse cx="1044.5" cy="454.9" rx="4.8" ry="2.0" fill="#24461f"/>
<ellipse cx="1044.5" cy="452.6" rx="4.6" ry="2.6" fill="#41703a"/>
<ellipse cx="1052.8" cy="456.3" rx="4.7" ry="2.1" fill="#24461f"/>
<ellipse cx="1052.8" cy="453.9" rx="4.5" ry="2.7" fill="#457636"/>
<ellipse cx="1059.3" cy="455.6" rx="4.9" ry="2.1" fill="#24461f"/>
<ellipse cx="1059.3" cy="453.3" rx="4.7" ry="2.7" fill="#41703a"/>
<ellipse cx="1066.4" cy="456.2" rx="4.8" ry="1.9" fill="#24461f"/>
<ellipse cx="1066.4" cy="454.1" rx="4.6" ry="2.4" fill="#36602c"/>
<ellipse cx="1074.5" cy="455.5" rx="4.0" ry="1.7" fill="#24461f"/>
<ellipse cx="1074.5" cy="453.6" rx="3.8" ry="2.1" fill="#3e6c2f"/>
<ellipse cx="1081.2" cy="455.9" rx="4.1" ry="1.6" fill="#24461f"/>
<ellipse cx="1081.2" cy="454.1" rx="3.9" ry="2.0" fill="#39652c"/>
<ellipse cx="1002.4" cy="461.5" rx="5.4" ry="2.2" fill="#24461f"/>
<ellipse cx="1002.4" cy="459.1" rx="5.1" ry="2.7" fill="#3e6c2f"/>
<ellipse cx="1009.0" cy="461.1" rx="5.3" ry="2.0" fill="#24461f"/>
<ellipse cx="1009.0" cy="458.8" rx="5.0" ry="2.5" fill="#36602c"/>
<ellipse cx="1016.9" cy="461.6" rx="4.4" ry="1.9" fill="#24461f"/>
<ellipse cx="1016.9" cy="459.5" rx="4.2" ry="2.4" fill="#3e6c2f"/>
<ellipse cx="1025.9" cy="461.3" rx="5.0" ry="2.1" fill="#24461f"/>
<ellipse cx="1025.9" cy="458.9" rx="4.8" ry="2.6" fill="#457636"/>
<ellipse cx="1032.6" cy="461.9" rx="5.3" ry="2.4" fill="#24461f"/>
<ellipse cx="1032.6" cy="459.2" rx="5.1" ry="3.0" fill="#4b7d3a"/>
<ellipse cx="1039.3" cy="460.4" rx="3.9" ry="1.8" fill="#24461f"/>
<ellipse cx="1039.3" cy="458.3" rx="3.7" ry="2.3" fill="#39652c"/>
<ellipse cx="1046.1" cy="461.9" rx="4.7" ry="1.9" fill="#24461f"/>
<ellipse cx="1046.1" cy="459.8" rx="4.5" ry="2.4" fill="#41703a"/>
<ellipse cx="1053.7" cy="460.9" rx="4.9" ry="2.1" fill="#24461f"/>
<ellipse cx="1053.7" cy="458.5" rx="4.7" ry="2.7" fill="#39652c"/>
<ellipse cx="1061.4" cy="461.7" rx="3.8" ry="1.8" fill="#24461f"/>
<ellipse cx="1061.4" cy="459.7" rx="3.6" ry="2.3" fill="#41703a"/>
<ellipse cx="1070.2" cy="461.0" rx="4.5" ry="1.9" fill="#24461f"/>
<ellipse cx="1070.2" cy="458.9" rx="4.3" ry="2.4" fill="#3e6c2f"/>
<ellipse cx="1077.9" cy="460.8" rx="4.6" ry="2.0" fill="#24461f"/>
<ellipse cx="1077.9" cy="458.6" rx="4.4" ry="2.5" fill="#3e6c2f"/>
<ellipse cx="995.6" cy="465.3" rx="5.1" ry="2.1" fill="#24461f"/>
<ellipse cx="995.6" cy="463.0" rx="4.8" ry="2.6" fill="#4b7d3a"/>
<ellipse cx="1003.0" cy="467.6" rx="5.1" ry="2.5" fill="#24461f"/>
<ellipse cx="1003.0" cy="464.8" rx="4.8" ry="3.1" fill="#39652c"/>
<ellipse cx="1011.4" cy="465.5" rx="3.8" ry="1.7" fill="#24461f"/>
<ellipse cx="1011.4" cy="463.6" rx="3.6" ry="2.1" fill="#39652c"/>
<ellipse cx="1018.9" cy="464.8" rx="4.3" ry="1.9" fill="#24461f"/>
<ellipse cx="1018.9" cy="462.7" rx="4.1" ry="2.3" fill="#36602c"/>
<ellipse cx="1027.7" cy="465.5" rx="4.9" ry="2.3" fill="#24461f"/>
<ellipse cx="1027.7" cy="462.9" rx="4.7" ry="2.9" fill="#4b7d3a"/>
<ellipse cx="1035.3" cy="467.2" rx="5.4" ry="2.5" fill="#24461f"/>
<ellipse cx="1035.3" cy="464.4" rx="5.1" ry="3.1" fill="#39652c"/>
<ellipse cx="1044.6" cy="465.6" rx="4.7" ry="1.9" fill="#24461f"/>
<ellipse cx="1044.6" cy="463.5" rx="4.5" ry="2.4" fill="#39652c"/>
<ellipse cx="1053.7" cy="466.0" rx="5.0" ry="2.3" fill="#24461f"/>
<ellipse cx="1053.7" cy="463.3" rx="4.8" ry="2.9" fill="#36602c"/>
<ellipse cx="1061.5" cy="466.5" rx="5.5" ry="2.4" fill="#24461f"/>
<ellipse cx="1061.5" cy="463.8" rx="5.2" ry="3.0" fill="#4b7d3a"/>
<ellipse cx="1069.0" cy="466.0" rx="5.4" ry="2.2" fill="#24461f"/>
<ellipse cx="1069.0" cy="463.6" rx="5.1" ry="2.8" fill="#3e6c2f"/>
<ellipse cx="1076.2" cy="465.9" rx="4.9" ry="2.0" fill="#24461f"/>
<ellipse cx="1076.2" cy="463.7" rx="4.7" ry="2.5" fill="#36602c"/>
<ellipse cx="1083.3" cy="467.2" rx="5.6" ry="2.7" fill="#24461f"/>
<ellipse cx="1083.3" cy="464.1" rx="5.3" ry="3.4" fill="#457636"/>
<ellipse cx="996.0" cy="468.7" rx="4.8" ry="2.0" fill="#24461f"/>
<ellipse cx="996.0" cy="466.4" rx="4.5" ry="2.5" fill="#41703a"/>
<ellipse cx="1003.1" cy="469.4" rx="5.2" ry="2.2" fill="#24461f"/>
<ellipse cx="1003.1" cy="466.9" rx="5.0" ry="2.8" fill="#39652c"/>
<ellipse cx="1011.1" cy="469.2" rx="4.6" ry="1.8" fill="#24461f"/>
<ellipse cx="1011.1" cy="467.1" rx="4.4" ry="2.3" fill="#41703a"/>
<ellipse cx="1019.0" cy="468.6" rx="5.0" ry="2.0" fill="#24461f"/>
<ellipse cx="1019.0" cy="466.4" rx="4.8" ry="2.5" fill="#41703a"/>
<ellipse cx="1027.3" cy="471.2" rx="4.4" ry="1.9" fill="#24461f"/>
<ellipse cx="1027.3" cy="469.1" rx="4.2" ry="2.3" fill="#457636"/>
<ellipse cx="1035.3" cy="471.1" rx="5.1" ry="2.2" fill="#24461f"/>
<ellipse cx="1035.3" cy="468.7" rx="4.9" ry="2.7" fill="#457636"/>
<ellipse cx="1042.6" cy="469.6" rx="4.8" ry="1.9" fill="#24461f"/>
<ellipse cx="1042.6" cy="467.4" rx="4.6" ry="2.4" fill="#457636"/>
<ellipse cx="1051.2" cy="469.7" rx="5.6" ry="2.1" fill="#24461f"/>
<ellipse cx="1051.2" cy="467.3" rx="5.3" ry="2.7" fill="#3e6c2f"/>
<ellipse cx="1059.0" cy="471.3" rx="4.9" ry="2.0" fill="#24461f"/>
<ellipse cx="1059.0" cy="469.0" rx="4.7" ry="2.6" fill="#41703a"/>
<ellipse cx="1066.9" cy="469.6" rx="4.3" ry="1.8" fill="#24461f"/>
<ellipse cx="1066.9" cy="467.6" rx="4.1" ry="2.2" fill="#36602c"/>
<ellipse cx="1074.9" cy="472.0" rx="5.6" ry="2.5" fill="#24461f"/>
<ellipse cx="1074.9" cy="469.2" rx="5.4" ry="3.2" fill="#39652c"/>
<ellipse cx="1083.8" cy="469.1" rx="4.3" ry="1.7" fill="#24461f"/>
<ellipse cx="1083.8" cy="467.2" rx="4.1" ry="2.1" fill="#39652c"/>
<ellipse cx="987.7" cy="473.9" rx="5.2" ry="2.3" fill="#24461f"/>
<ellipse cx="987.7" cy="471.3" rx="5.0" ry="2.8" fill="#39652c"/>
<ellipse cx="995.0" cy="473.7" rx="4.8" ry="2.1" fill="#24461f"/>
<ellipse cx="995.0" cy="471.4" rx="4.5" ry="2.6" fill="#41703a"/>
<ellipse cx="1002.9" cy="476.3" rx="5.5" ry="2.3" fill="#24461f"/>
<ellipse cx="1002.9" cy="473.8" rx="5.3" ry="2.8" fill="#39652c"/>
<ellipse cx="1012.4" cy="475.4" rx="4.6" ry="2.0" fill="#24461f"/>
<ellipse cx="1012.4" cy="473.1" rx="4.3" ry="2.5" fill="#4b7d3a"/>
<ellipse cx="1021.0" cy="476.7" rx="5.7" ry="2.8" fill="#24461f"/>
<ellipse cx="1021.0" cy="473.6" rx="5.5" ry="3.5" fill="#3e6c2f"/>
<ellipse cx="1030.3" cy="474.3" rx="5.1" ry="2.1" fill="#24461f"/>
<ellipse cx="1030.3" cy="471.9" rx="4.8" ry="2.6" fill="#39652c"/>
<ellipse cx="1039.5" cy="473.5" rx="4.7" ry="2.2" fill="#24461f"/>
<ellipse cx="1039.5" cy="471.0" rx="4.5" ry="2.7" fill="#41703a"/>
<ellipse cx="1047.0" cy="473.6" rx="5.1" ry="2.3" fill="#24461f"/>
<ellipse cx="1047.0" cy="471.0" rx="4.9" ry="2.9" fill="#3e6c2f"/>
<ellipse cx="1056.7" cy="474.7" rx="4.0" ry="1.9" fill="#24461f"/>
<ellipse cx="1056.7" cy="472.6" rx="3.8" ry="2.4" fill="#4b7d3a"/>
<ellipse cx="1065.5" cy="476.1" rx="5.9" ry="2.7" fill="#24461f"/>
<ellipse cx="1065.5" cy="473.0" rx="5.6" ry="3.4" fill="#4b7d3a"/>
<ellipse cx="1074.0" cy="476.0" rx="5.4" ry="2.6" fill="#24461f"/>
<ellipse cx="1074.0" cy="473.0" rx="5.2" ry="3.3" fill="#4b7d3a"/>
<ellipse cx="1083.4" cy="474.1" rx="5.7" ry="2.6" fill="#24461f"/>
<ellipse cx="1083.4" cy="471.2" rx="5.4" ry="3.3" fill="#4b7d3a"/>
<ellipse cx="987.7" cy="479.5" rx="4.5" ry="2.1" fill="#24461f"/>
<ellipse cx="987.7" cy="477.2" rx="4.3" ry="2.6" fill="#4b7d3a"/>
<ellipse cx="997.9" cy="480.4" rx="5.0" ry="2.2" fill="#24461f"/>
<ellipse cx="997.9" cy="477.9" rx="4.8" ry="2.8" fill="#3e6c2f"/>
<ellipse cx="1005.5" cy="480.0" rx="5.8" ry="2.7" fill="#24461f"/>
<ellipse cx="1005.5" cy="476.9" rx="5.6" ry="3.4" fill="#36602c"/>
<ellipse cx="1015.7" cy="479.4" rx="5.0" ry="2.0" fill="#24461f"/>
<ellipse cx="1015.7" cy="477.3" rx="4.8" ry="2.4" fill="#4b7d3a"/>
<ellipse cx="1025.2" cy="479.1" rx="5.9" ry="2.4" fill="#24461f"/>
<ellipse cx="1025.2" cy="476.4" rx="5.6" ry="3.0" fill="#36602c"/>
<ellipse cx="1035.0" cy="479.9" rx="6.0" ry="3.0" fill="#24461f"/>
<ellipse cx="1035.0" cy="476.6" rx="5.7" ry="3.7" fill="#36602c"/>
<ellipse cx="1045.1" cy="479.3" rx="5.4" ry="2.3" fill="#24461f"/>
<ellipse cx="1045.1" cy="476.7" rx="5.1" ry="2.9" fill="#457636"/>
<ellipse cx="1052.7" cy="479.6" rx="5.3" ry="2.4" fill="#24461f"/>
<ellipse cx="1052.7" cy="476.9" rx="5.0" ry="3.0" fill="#36602c"/>
<ellipse cx="1060.3" cy="479.2" rx="5.3" ry="2.5" fill="#24461f"/>
<ellipse cx="1060.3" cy="476.4" rx="5.1" ry="3.1" fill="#41703a"/>
<ellipse cx="1068.1" cy="480.0" rx="4.8" ry="2.2" fill="#24461f"/>
<ellipse cx="1068.1" cy="477.5" rx="4.6" ry="2.7" fill="#4b7d3a"/>
<ellipse cx="1076.5" cy="480.9" rx="6.0" ry="2.4" fill="#24461f"/>
<ellipse cx="1076.5" cy="478.2" rx="5.7" ry="3.0" fill="#39652c"/>
<ellipse cx="1084.3" cy="481.0" rx="5.2" ry="2.5" fill="#24461f"/>
<ellipse cx="1084.3" cy="478.1" rx="4.9" ry="3.1" fill="#41703a"/>
<ellipse cx="989.7" cy="484.7" rx="6.1" ry="2.5" fill="#24461f"/>
<ellipse cx="989.7" cy="481.9" rx="5.8" ry="3.1" fill="#457636"/>
<ellipse cx="999.8" cy="486.3" rx="5.2" ry="2.2" fill="#24461f"/>
<ellipse cx="999.8" cy="483.8" rx="5.0" ry="2.8" fill="#457636"/>
<ellipse cx="1009.6" cy="485.5" rx="4.5" ry="2.0" fill="#24461f"/>
<ellipse cx="1009.6" cy="483.2" rx="4.2" ry="2.5" fill="#3e6c2f"/>
<ellipse cx="1019.9" cy="485.2" rx="5.2" ry="2.2" fill="#24461f"/>
<ellipse cx="1019.9" cy="482.7" rx="5.0" ry="2.8" fill="#4b7d3a"/>
<ellipse cx="1029.0" cy="484.8" rx="6.0" ry="2.3" fill="#24461f"/>
<ellipse cx="1029.0" cy="482.2" rx="5.7" ry="2.9" fill="#36602c"/>
<ellipse cx="1037.8" cy="486.8" rx="6.3" ry="2.7" fill="#24461f"/>
<ellipse cx="1037.8" cy="483.7" rx="6.0" ry="3.4" fill="#457636"/>
<ellipse cx="1047.7" cy="484.5" rx="6.2" ry="2.7" fill="#24461f"/>
<ellipse cx="1047.7" cy="481.5" rx="5.9" ry="3.4" fill="#457636"/>
<ellipse cx="1055.8" cy="485.4" rx="5.0" ry="2.1" fill="#24461f"/>
<ellipse cx="1055.8" cy="483.1" rx="4.8" ry="2.6" fill="#39652c"/>
<ellipse cx="1066.2" cy="486.2" rx="6.0" ry="2.5" fill="#24461f"/>
<ellipse cx="1066.2" cy="483.3" rx="5.7" ry="3.2" fill="#36602c"/>
<ellipse cx="1076.4" cy="486.0" rx="6.0" ry="2.6" fill="#24461f"/>
<ellipse cx="1076.4" cy="483.1" rx="5.7" ry="3.2" fill="#39652c"/>
<ellipse cx="1085.6" cy="485.9" rx="5.5" ry="2.6" fill="#24461f"/>
<ellipse cx="1085.6" cy="483.0" rx="5.2" ry="3.2" fill="#4b7d3a"/>
<ellipse cx="989.0" cy="489.7" rx="5.5" ry="2.7" fill="#24461f"/>
<ellipse cx="989.0" cy="486.7" rx="5.2" ry="3.4" fill="#36602c"/>
<ellipse cx="999.3" cy="489.0" rx="5.4" ry="2.6" fill="#24461f"/>
<ellipse cx="999.3" cy="486.1" rx="5.2" ry="3.3" fill="#41703a"/>
<ellipse cx="1010.1" cy="489.5" rx="5.4" ry="2.2" fill="#24461f"/>
<ellipse cx="1010.1" cy="487.1" rx="5.2" ry="2.7" fill="#36602c"/>
<ellipse cx="1018.5" cy="490.1" rx="5.3" ry="2.5" fill="#24461f"/>
<ellipse cx="1018.5" cy="487.2" rx="5.0" ry="3.2" fill="#457636"/>
<ellipse cx="1028.1" cy="489.7" rx="6.2" ry="2.9" fill="#24461f"/>
<ellipse cx="1028.1" cy="486.4" rx="5.9" ry="3.6" fill="#36602c"/>
<ellipse cx="1036.7" cy="490.0" rx="4.5" ry="2.2" fill="#24461f"/>
<ellipse cx="1036.7" cy="487.5" rx="4.3" ry="2.7" fill="#39652c"/>
<ellipse cx="1045.6" cy="488.4" rx="4.5" ry="1.9" fill="#24461f"/>
<ellipse cx="1045.6" cy="486.3" rx="4.2" ry="2.4" fill="#457636"/>
<ellipse cx="1053.8" cy="490.7" rx="5.1" ry="2.3" fill="#24461f"/>
<ellipse cx="1053.8" cy="488.1" rx="4.8" ry="2.9" fill="#36602c"/>
<ellipse cx="1064.8" cy="489.2" rx="6.0" ry="2.7" fill="#24461f"/>
<ellipse cx="1064.8" cy="486.2" rx="5.7" ry="3.3" fill="#36602c"/>
<ellipse cx="1073.0" cy="490.4" rx="6.6" ry="2.8" fill="#24461f"/>
<ellipse cx="1073.0" cy="487.3" rx="6.2" ry="3.5" fill="#39652c"/>
<ellipse cx="1081.4" cy="489.7" rx="4.6" ry="2.3" fill="#24461f"/>
<ellipse cx="1081.4" cy="487.2" rx="4.3" ry="2.8" fill="#4b7d3a"/>
<ellipse cx="986.4" cy="497.1" rx="6.0" ry="2.6" fill="#24461f"/>
<ellipse cx="986.4" cy="494.2" rx="5.7" ry="3.2" fill="#39652c"/>
<ellipse cx="994.5" cy="494.6" rx="6.3" ry="2.7" fill="#24461f"/>
<ellipse cx="994.5" cy="491.6" rx="6.0" ry="3.4" fill="#3e6c2f"/>
<ellipse cx="1002.8" cy="497.1" rx="6.5" ry="2.9" fill="#24461f"/>
<ellipse cx="1002.8" cy="493.9" rx="6.2" ry="3.6" fill="#3e6c2f"/>
<ellipse cx="1013.2" cy="494.9" rx="6.4" ry="2.5" fill="#24461f"/>
<ellipse cx="1013.2" cy="492.1" rx="6.1" ry="3.1" fill="#4b7d3a"/>
<ellipse cx="1021.6" cy="494.4" rx="4.7" ry="2.0" fill="#24461f"/>
<ellipse cx="1021.6" cy="492.1" rx="4.5" ry="2.5" fill="#3e6c2f"/>
<ellipse cx="1029.9" cy="496.7" rx="5.6" ry="2.5" fill="#24461f"/>
<ellipse cx="1029.9" cy="493.9" rx="5.3" ry="3.2" fill="#3e6c2f"/>
<ellipse cx="1041.1" cy="495.1" rx="6.1" ry="2.8" fill="#24461f"/>
<ellipse cx="1041.1" cy="492.0" rx="5.9" ry="3.5" fill="#457636"/>
<ellipse cx="1051.0" cy="494.0" rx="5.3" ry="2.1" fill="#24461f"/>
<ellipse cx="1051.0" cy="491.6" rx="5.0" ry="2.6" fill="#41703a"/>
<ellipse cx="1062.3" cy="494.3" rx="4.7" ry="2.2" fill="#24461f"/>
<ellipse cx="1062.3" cy="491.9" rx="4.5" ry="2.7" fill="#41703a"/>
<ellipse cx="1070.5" cy="495.9" rx="5.7" ry="2.5" fill="#24461f"/>
<ellipse cx="1070.5" cy="493.0" rx="5.4" ry="3.2" fill="#4b7d3a"/>
<ellipse cx="1080.4" cy="494.2" rx="4.6" ry="2.1" fill="#24461f"/>
<ellipse cx="1080.4" cy="491.8" rx="4.4" ry="2.7" fill="#36602c"/>
<ellipse cx="988.7" cy="500.4" rx="5.5" ry="2.1" fill="#24461f"/>
<ellipse cx="988.7" cy="498.0" rx="5.2" ry="2.7" fill="#39652c"/>
<ellipse cx="1000.0" cy="500.8" rx="5.0" ry="2.0" fill="#24461f"/>
<ellipse cx="1000.0" cy="498.6" rx="4.8" ry="2.5" fill="#457636"/>
<ellipse cx="1010.8" cy="503.7" rx="7.0" ry="3.2" fill="#24461f"/>
<ellipse cx="1010.8" cy="500.1" rx="6.7" ry="4.0" fill="#39652c"/>
<ellipse cx="1019.5" cy="502.0" rx="4.9" ry="2.0" fill="#24461f"/>
<ellipse cx="1019.5" cy="499.8" rx="4.6" ry="2.4" fill="#39652c"/>
<ellipse cx="1030.9" cy="502.9" rx="4.9" ry="2.3" fill="#24461f"/>
<ellipse cx="1030.9" cy="500.3" rx="4.7" ry="2.9" fill="#4b7d3a"/>
<ellipse cx="1041.9" cy="502.9" rx="6.9" ry="3.1" fill="#24461f"/>
<ellipse cx="1041.9" cy="499.3" rx="6.5" ry="3.9" fill="#457636"/>
<ellipse cx="1052.3" cy="502.4" rx="6.7" ry="3.0" fill="#24461f"/>
<ellipse cx="1052.3" cy="499.0" rx="6.4" ry="3.8" fill="#3e6c2f"/>
<ellipse cx="1063.2" cy="502.6" rx="5.4" ry="2.5" fill="#24461f"/>
<ellipse cx="1063.2" cy="499.8" rx="5.1" ry="3.2" fill="#4b7d3a"/>
<ellipse cx="1073.6" cy="501.1" rx="5.5" ry="2.2" fill="#24461f"/>
<ellipse cx="1073.6" cy="498.6" rx="5.2" ry="2.7" fill="#4b7d3a"/>
<ellipse cx="1084.3" cy="501.1" rx="4.9" ry="2.3" fill="#24461f"/>
<ellipse cx="1084.3" cy="498.5" rx="4.7" ry="2.9" fill="#41703a"/>
<ellipse cx="984.4" cy="508.4" rx="6.0" ry="2.4" fill="#24461f"/>
<ellipse cx="984.4" cy="505.7" rx="5.7" ry="3.1" fill="#41703a"/>
<ellipse cx="993.1" cy="507.1" rx="5.2" ry="2.1" fill="#24461f"/>
<ellipse cx="993.1" cy="504.8" rx="5.0" ry="2.6" fill="#39652c"/>
<ellipse cx="1001.9" cy="508.6" rx="6.9" ry="3.2" fill="#24461f"/>
<ellipse cx="1001.9" cy="505.0" rx="6.6" ry="4.0" fill="#3e6c2f"/>
<ellipse cx="1011.6" cy="507.9" rx="6.4" ry="2.6" fill="#24461f"/>
<ellipse cx="1011.6" cy="505.0" rx="6.1" ry="3.2" fill="#4b7d3a"/>
<ellipse cx="1023.1" cy="506.6" rx="5.7" ry="2.8" fill="#24461f"/>
<ellipse cx="1023.1" cy="503.6" rx="5.4" ry="3.4" fill="#4b7d3a"/>
<ellipse cx="1033.9" cy="506.3" rx="5.0" ry="2.3" fill="#24461f"/>
<ellipse cx="1033.9" cy="503.7" rx="4.8" ry="2.9" fill="#457636"/>
<ellipse cx="1044.5" cy="508.9" rx="6.3" ry="2.5" fill="#24461f"/>
<ellipse cx="1044.5" cy="506.1" rx="6.0" ry="3.1" fill="#4b7d3a"/>
<ellipse cx="1055.7" cy="506.5" rx="4.9" ry="2.4" fill="#24461f"/>
<ellipse cx="1055.7" cy="503.8" rx="4.7" ry="3.0" fill="#457636"/>
<ellipse cx="1066.1" cy="508.5" rx="5.9" ry="2.4" fill="#24461f"/>
<ellipse cx="1066.1" cy="505.8" rx="5.6" ry="3.0" fill="#39652c"/>
<ellipse cx="1077.7" cy="507.4" rx="6.2" ry="2.9" fill="#24461f"/>
<ellipse cx="1077.7" cy="504.1" rx="5.9" ry="3.6" fill="#457636"/>
<ellipse cx="1087.7" cy="509.2" rx="6.9" ry="3.1" fill="#24461f"/>
<ellipse cx="1087.7" cy="505.6" rx="6.6" ry="3.9" fill="#3e6c2f"/>
<ellipse cx="989.1" cy="514.5" rx="6.3" ry="2.4" fill="#24461f"/>
<ellipse cx="989.1" cy="511.8" rx="6.0" ry="3.0" fill="#457636"/>
<ellipse cx="999.6" cy="514.7" rx="5.8" ry="2.8" fill="#24461f"/>
<ellipse cx="999.6" cy="511.6" rx="5.5" ry="3.5" fill="#39652c"/>
<ellipse cx="1010.4" cy="513.5" rx="6.4" ry="2.5" fill="#24461f"/>
<ellipse cx="1010.4" cy="510.7" rx="6.1" ry="3.1" fill="#457636"/>
<ellipse cx="1020.8" cy="512.5" rx="6.4" ry="2.8" fill="#24461f"/>
<ellipse cx="1020.8" cy="509.3" rx="6.1" ry="3.6" fill="#457636"/>
<ellipse cx="1032.8" cy="512.8" rx="6.8" ry="3.1" fill="#24461f"/>
<ellipse cx="1032.8" cy="509.4" rx="6.5" ry="3.8" fill="#41703a"/>
<ellipse cx="1043.2" cy="514.0" rx="6.8" ry="2.9" fill="#24461f"/>
<ellipse cx="1043.2" cy="510.7" rx="6.5" ry="3.6" fill="#41703a"/>
<ellipse cx="1055.6" cy="514.8" rx="6.8" ry="3.0" fill="#24461f"/>
<ellipse cx="1055.6" cy="511.4" rx="6.4" ry="3.7" fill="#4b7d3a"/>
<ellipse cx="1065.9" cy="514.5" rx="6.8" ry="3.0" fill="#24461f"/>
<ellipse cx="1065.9" cy="511.1" rx="6.5" ry="3.7" fill="#39652c"/>
<ellipse cx="1076.0" cy="513.0" rx="7.0" ry="3.2" fill="#24461f"/>
<ellipse cx="1076.0" cy="509.4" rx="6.7" ry="4.0" fill="#36602c"/>
<ellipse cx="1086.5" cy="515.0" rx="5.1" ry="2.5" fill="#24461f"/>
<ellipse cx="1086.5" cy="512.2" rx="4.9" ry="3.1" fill="#457636"/>
<ellipse cx="985.8" cy="523.0" rx="7.6" ry="3.5" fill="#24461f"/>
<ellipse cx="985.8" cy="519.0" rx="7.2" ry="4.4" fill="#36602c"/>
<ellipse cx="997.5" cy="520.7" rx="6.5" ry="2.6" fill="#24461f"/>
<ellipse cx="997.5" cy="517.9" rx="6.2" ry="3.2" fill="#3e6c2f"/>
<ellipse cx="1007.7" cy="522.3" rx="6.7" ry="2.8" fill="#24461f"/>
<ellipse cx="1007.7" cy="519.1" rx="6.4" ry="3.6" fill="#3e6c2f"/>
<ellipse cx="1019.7" cy="520.9" rx="7.2" ry="3.2" fill="#24461f"/>
<ellipse cx="1019.7" cy="517.3" rx="6.9" ry="4.0" fill="#457636"/>
<ellipse cx="1032.5" cy="520.8" rx="6.3" ry="2.5" fill="#24461f"/>
<ellipse cx="1032.5" cy="518.0" rx="6.0" ry="3.1" fill="#36602c"/>
<ellipse cx="1045.2" cy="521.9" rx="7.8" ry="3.2" fill="#24461f"/>
<ellipse cx="1045.2" cy="518.2" rx="7.5" ry="4.0" fill="#3e6c2f"/>
<ellipse cx="1055.4" cy="520.1" rx="6.0" ry="2.7" fill="#24461f"/>
<ellipse cx="1055.4" cy="517.1" rx="5.7" ry="3.4" fill="#457636"/>
<ellipse cx="1065.0" cy="520.4" rx="5.7" ry="2.6" fill="#24461f"/>
<ellipse cx="1065.0" cy="517.4" rx="5.5" ry="3.3" fill="#41703a"/>
<ellipse cx="1076.5" cy="522.6" rx="7.6" ry="3.5" fill="#24461f"/>
<ellipse cx="1076.5" cy="518.7" rx="7.2" ry="4.4" fill="#4b7d3a"/>
<ellipse cx="1086.8" cy="520.8" rx="6.8" ry="2.8" fill="#24461f"/>
<ellipse cx="1086.8" cy="517.6" rx="6.5" ry="3.5" fill="#4b7d3a"/>
<ellipse cx="983.7" cy="526.1" rx="5.5" ry="2.2" fill="#24461f"/>
<ellipse cx="983.7" cy="523.6" rx="5.3" ry="2.7" fill="#41703a"/>
<ellipse cx="995.6" cy="527.9" rx="6.6" ry="2.8" fill="#24461f"/>
<ellipse cx="995.6" cy="524.8" rx="6.3" ry="3.5" fill="#3e6c2f"/>
<ellipse cx="1007.9" cy="528.4" rx="7.4" ry="2.9" fill="#24461f"/>
<ellipse cx="1007.9" cy="525.1" rx="7.1" ry="3.6" fill="#4b7d3a"/>
<ellipse cx="1018.1" cy="527.2" rx="5.6" ry="2.3" fill="#24461f"/>
<ellipse cx="1018.1" cy="524.6" rx="5.4" ry="2.8" fill="#4b7d3a"/>
<ellipse cx="1030.4" cy="529.0" rx="6.1" ry="2.8" fill="#24461f"/>
<ellipse cx="1030.4" cy="525.8" rx="5.8" ry="3.5" fill="#4b7d3a"/>
<ellipse cx="1043.4" cy="526.3" rx="7.3" ry="2.9" fill="#24461f"/>
<ellipse cx="1043.4" cy="523.1" rx="6.9" ry="3.6" fill="#39652c"/>
<ellipse cx="1053.7" cy="527.9" rx="5.7" ry="2.7" fill="#24461f"/>
<ellipse cx="1053.7" cy="524.9" rx="5.5" ry="3.4" fill="#36602c"/>
<ellipse cx="1064.7" cy="528.6" rx="5.9" ry="2.9" fill="#24461f"/>
<ellipse cx="1064.7" cy="525.4" rx="5.7" ry="3.6" fill="#41703a"/>
<ellipse cx="1078.1" cy="528.5" rx="8.1" ry="3.2" fill="#24461f"/>
<ellipse cx="1078.1" cy="524.9" rx="7.7" ry="4.0" fill="#3e6c2f"/>
<ellipse cx="987.8" cy="534.6" rx="8.1" ry="4.0" fill="#24461f"/>
<ellipse cx="987.8" cy="530.1" rx="7.7" ry="5.0" fill="#3e6c2f"/>
<ellipse cx="998.9" cy="535.3" rx="6.9" ry="2.6" fill="#24461f"/>
<ellipse cx="998.9" cy="532.4" rx="6.6" ry="3.3" fill="#41703a"/>
<ellipse cx="1012.8" cy="532.6" rx="5.6" ry="2.4" fill="#24461f"/>
<ellipse cx="1012.8" cy="529.9" rx="5.4" ry="3.0" fill="#39652c"/>
<ellipse cx="1026.6" cy="533.8" rx="7.8" ry="3.6" fill="#24461f"/>
<ellipse cx="1026.6" cy="529.8" rx="7.4" ry="4.5" fill="#39652c"/>
<ellipse cx="1036.8" cy="536.4" rx="8.4" ry="3.9" fill="#24461f"/>
<ellipse cx="1036.8" cy="532.0" rx="8.0" ry="4.9" fill="#457636"/>
<ellipse cx="1050.5" cy="533.9" rx="6.4" ry="2.8" fill="#24461f"/>
<ellipse cx="1050.5" cy="530.7" rx="6.1" ry="3.5" fill="#36602c"/>
<ellipse cx="1063.6" cy="532.7" rx="5.9" ry="2.5" fill="#24461f"/>
<ellipse cx="1063.6" cy="529.8" rx="5.7" ry="3.2" fill="#3e6c2f"/>
<ellipse cx="1075.8" cy="532.8" rx="6.8" ry="2.8" fill="#24461f"/>
<ellipse cx="1075.8" cy="529.7" rx="6.5" ry="3.5" fill="#36602c"/>
<ellipse cx="983.3" cy="541.0" rx="7.1" ry="2.8" fill="#24461f"/>
<ellipse cx="983.3" cy="537.8" rx="6.7" ry="3.5" fill="#4b7d3a"/>
<ellipse cx="997.2" cy="540.1" rx="7.1" ry="2.8" fill="#24461f"/>
<ellipse cx="997.2" cy="536.9" rx="6.8" ry="3.5" fill="#3e6c2f"/>
<ellipse cx="1007.6" cy="541.4" rx="6.9" ry="2.6" fill="#24461f"/>
<ellipse cx="1007.6" cy="538.5" rx="6.5" ry="3.3" fill="#39652c"/>
<ellipse cx="1020.4" cy="542.7" rx="8.3" ry="3.3" fill="#24461f"/>
<ellipse cx="1020.4" cy="539.0" rx="7.9" ry="4.1" fill="#457636"/>
<ellipse cx="1031.5" cy="541.5" rx="5.8" ry="2.6" fill="#24461f"/>
<ellipse cx="1031.5" cy="538.6" rx="5.6" ry="3.2" fill="#39652c"/>
<ellipse cx="1044.4" cy="541.8" rx="7.2" ry="2.8" fill="#24461f"/>
<ellipse cx="1044.4" cy="538.7" rx="6.8" ry="3.4" fill="#457636"/>
<ellipse cx="1056.4" cy="542.1" rx="7.1" ry="3.2" fill="#24461f"/>
<ellipse cx="1056.4" cy="538.5" rx="6.7" ry="4.0" fill="#36602c"/>
<ellipse cx="1069.5" cy="540.6" rx="5.9" ry="2.3" fill="#24461f"/>
<ellipse cx="1069.5" cy="538.1" rx="5.6" ry="2.8" fill="#36602c"/>
<ellipse cx="1081.6" cy="543.3" rx="8.2" ry="4.0" fill="#24461f"/>
<ellipse cx="1081.6" cy="538.8" rx="7.8" ry="5.0" fill="#4b7d3a"/>
</g>
<g filter="url(#bl2)">
<g fill="#5aa03c"><ellipse cx="1040" cy="512" rx="32" ry="2.600"/><ellipse cx="1070" cy="515" rx="12" ry="2.200"/><ellipse cx="1012" cy="529" rx="14" ry="2.600"/></g>
<g fill="#7b7f3a" fill-opacity=".85"><ellipse cx="1030" cy="497" rx="28" ry="2.300"/></g>
<path d="M993 521 Q1030 513 1080 519" stroke="#a9b4a4" stroke-width="1.300" fill="none"/>
<path d="M1020 537 Q1035 528 1052 531" stroke="#9aa79a" stroke-width="1.600" fill="none"/>
</g>
<!-- supports -->
<g stroke="#d6dcd8" stroke-width=".8" fill="none"><path d="M900 458 L906 476 L912 456 L918 476 L924 455 M946 452 L952 476 L958 447 L964 476 L970 442"/><path d="M903 458 L909 476 M915 456 L921 476 M949 450 L955 476 M961 446 L967 476 M973 440 L968 476"/></g>
<rect x="927" y="468" width="12" height="8" fill="#e6dca4"/>
<!-- blue roof -->
<path d="M882 418 L888 413 L921 437 L882 443Z" fill="#1f5ec8"/>
<!-- canopy -->
<path d="M882 442.500 Q935 438 965 425 Q990 415 1004.500 407.500 L1005 419.500 Q990 429 965 438.500 Q935 450 882 454.500Z" fill="#b6aa96"/>
<path d="M882 442.500 Q935 438 965 425 Q990 415 1004.500 407.500 L1005 419.500 Q990 429 965 438.500 Q935 450 882 454.500Z" fill="url(#tri)"/>
<path d="M882 442.500 Q935 438 965 425 Q990 415 1004.500 407.500" stroke="#d8d0c0" stroke-width=".8" fill="none"/>
<path d="M882 454.500 Q935 450 965 438.500 Q990 429 1005 419.500 L1005 422 Q990 432 965 441.500 Q935 453 882 457.500Z" fill="#5f5a58"/>
<!-- white building -->
<rect x="882" y="476" width="111" height="61" fill="#e3e3db"/>
<rect x="882" y="473.500" width="111" height="3.500" fill="#d6c88e"/>
<g fill="#4e5967"><rect x="889" y="483.600" width="103" height="6.200"/><rect x="889" y="494.800" width="103" height="6.200"/><rect x="889" y="506.800" width="103" height="6.200"/><rect x="889" y="518.400" width="103" height="6"/><rect x="889" y="529.600" width="103" height="6"/></g>
<g fill="#e3e3db" fill-opacity=".55"><rect x="889" y="483" width="103" height="54" fill="url(#vsw)"/></g>
<g fill="#2e3846"><rect x="882" y="482.500" width="6" height="9"/><rect x="882" y="494" width="6" height="9"/><rect x="882" y="506" width="6" height="9"/><rect x="882" y="517.500" width="6" height="9"/></g>
<rect x="882" y="490" width="198" height="47" fill="url(#fogR)"/>
</g>
</svg>

<svg id="logo" viewBox="0 0 100 56" width="100" height="56">
<rect x="6.5" y="10.500" width="55" height="38.500" fill="none" stroke="#a0181c" stroke-opacity=".38" stroke-width=".5"/>
<path d="M6.500 49.100 H95.500" stroke="#a0181c" stroke-opacity=".6" stroke-width=".5"/>
<path d="M6.78 32.33 L11.47 30.24 L15.64 28.15 L17.73 25.03 L20.86 23.46 L22.42 21.38 L26.07 19.29 L30.24 17.21 L32.85 16.16 L34.93 17.73 L37.02 20.33 L39.10 22.42 L41.71 23.46 L45.88 22.42 L49.01 21.38 L51.09 19.29 L50.78 16.68 L47.97 15.64 L46.40 14.08 L47.97 12.51 L50.05 12.30 L53.18 14.60 L55.79 17.21 L57.14 19.81 L57.35 22.42 L59.44 23.77 L62.57 24.19 L65.17 25.03 L66.74 26.59 L65.48 26.90 L62.57 25.86 L59.44 26.07 L57.35 26.59 L55.79 28.68 L54.22 31.28 L52.66 32.85 L51.09 34.93 L50.05 37.54 L49.01 39.10 L45.88 38.79 L43.80 38.37 L42.75 40.15 L41.71 41.71 L39.62 43.27 L36.50 44.32 L33.37 45.36 L30.24 47.45 L27.63 49.01 L26.90 47.97 L28.68 45.88 L31.28 44.32 L34.41 42.75 L35.45 41.19 L31.28 40.67 L27.11 40.15 L22.94 41.19 L19.81 42.75 L17.73 44.84 L16.68 47.45 L15.64 49.53 L12.51 49.84 L10.95 47.97 L12.51 45.88 L15.64 44.32 L16.68 41.71 L14.60 41.19 L10.43 41.19 L7.30 39.62Z" fill="#a30909" stroke="#a30909" stroke-width=".6" stroke-linejoin="round"/>
<path d="M6.78 22.73 L11.47 20.33 L16.68 17.21 L22.42 13.56 L27.11 11.26 L31.28 8.55 L34.93 6.47 L38.58 5.21 L42.23 6.05 L45.36 8.34 L47.45 10.43 L45.88 10.84 L42.75 8.76 L39.10 7.30 L35.97 8.13 L32.33 10.22 L28.15 12.51 L22.94 14.60 L17.21 17.94 L11.99 20.86 L7.30 23.15Z" fill="#a30909" stroke="#a30909" stroke-width=".4" stroke-linejoin="round"/>
<ellipse cx="20.800" cy="35" rx="1.100" ry=".7" fill="#2a7fd8"/><ellipse cx="41.700" cy="36" rx="1" ry=".7" fill="#2a7fd8"/><ellipse cx="44.800" cy="26" rx="1.300" ry=".6" fill="#2a7fd8"/>
<text x="55.700" y="40.800" font-family="'Liberation Serif','Noto Serif CJK SC',serif" font-weight="900" font-size="8" fill="#a30909" textLength="38.300" lengthAdjust="spacingAndGlyphs">中国·深圳</text>
<text x="44.300" y="47.400" font-family="'Liberation Serif',serif" font-weight="700" font-size="5.300" fill="#a30909" textLength="49" lengthAdjust="spacingAndGlyphs">SHENZHEN CHINA</text>
</svg>
<div id="title">深圳市财政局</div>
<div id="subtitle">Finance Bureau of Shenzhen Municipality</div>
<div id="search">输入关键字</div>
<div id="sbtn"><svg width="59" height="26" viewBox="0 0 59 26"><circle cx="28.3" cy="12.4" r="5.1" fill="none" stroke="#fff6e6" stroke-width="1.35"/><path d="M32.1 16.3 L35.4 19.3" stroke="#fff6e6" stroke-width="1.6" stroke-linecap="round"/></svg></div>

<div id="nav">
<i class="dv" style="left:136.2px"></i><i class="dv" style="left:273px"></i><i class="dv" style="left:409.8px"></i><i class="dv" style="left:546.5px"></i>
<svg class="ni" style="left:46.2px;top:9.1px" width="15.4" height="16" viewBox="0 0 15.4 16" fill="none" stroke="#e8e8e8" stroke-width="1.15" stroke-linejoin="round" stroke-linecap="round"><path d="M1 7.3 L7.7 1 L14.4 7.3"/><path d="M2.9 6.6 V15 H12.5 V6.6"/><circle cx="7.7" cy="7.9" r="1.7"/><path d="M5.4 15 V12 Q5.4 10.7 7.7 10.7 Q10 10.7 10 12 V15"/><path d="M7.7 12.6 V13.4" stroke-width="1"/></svg>
<span class="nt" style="left:66.6px">首页</span>
<svg class="ni" style="left:172.3px;top:9px" width="15" height="16" viewBox="0 0 15 16" fill="#f4f4f4"><rect x="0.2" y="0.9" width="3.1" height="3.2"/><rect x="0.2" y="6.1" width="3.1" height="3.2"/><rect x="0.2" y="11.5" width="3.1" height="3.2"/><rect x="5.1" y="0.6" width="9.6" height="1.5"/><rect x="5.1" y="2.9" width="8.2" height="1.3"/><rect x="5.1" y="5.9" width="9.6" height="1.5"/><rect x="5.1" y="8.2" width="8.2" height="1.3"/><rect x="5.1" y="11.2" width="9.6" height="1.5"/><rect x="5.1" y="13.5" width="8.2" height="1.3"/></svg>
<span class="nt" style="left:192.4px">信息公开</span>
<svg class="ni" style="left:307.6px;top:9.2px" width="18" height="16" viewBox="0 0 18 16" fill="none" stroke="#dedede" stroke-width="1.05" stroke-linejoin="round" stroke-linecap="round"><path d="M0.4 14.6 H17.4"/><path d="M2.6 14.4 V2.6 Q2.6 0.9 4.3 0.9 H9.5 Q11.2 0.9 11.2 2.6 V14.4"/><path d="M11.4 8 Q11.4 7 12.4 7 H14.5 Q15.5 7 15.5 8 V14.4"/><path d="M4.7 4.4 H6.2 M7.8 4.4 H9.3 M4.7 7.5 H6.2 M7.8 7.5 H9.3 M4.7 11.5 H6.2 M7.8 11.5 H9.3" stroke-width="1.2"/><path d="M12.8 9.5 H14.1 M12.8 11.7 H14.1" stroke-width="1.1"/></svg>
<span class="nt" style="left:331.5px">政务服务</span>
<svg class="ni" style="left:445.9px;top:9.5px" width="16" height="16" viewBox="0 0 16 16" fill="none" stroke="#ececec" stroke-width="1.15" stroke-linejoin="round" stroke-linecap="round"><path d="M5.4 0.8 H13.3 Q14.5 0.8 14.5 2 V8.3 Q14.5 9.5 13.3 9.5 H12.4 L10.6 11.4 V9.5 H5.4 Q4.2 9.5 4.2 8.3 V2 Q4.2 0.8 5.4 0.8Z"/><path d="M2.6 4 H1.9 Q0.8 4 0.8 5.200 V11.200 Q0.8 12.300 1.9 12.300 H3 V14.300 L5.200 12.300 H9.8 Q10.600 12.300 10.800 11.700"/><path d="M7.500 4.600 V4.700 M11.100 4.600 V4.700" stroke-width="1.700"/></svg>
<span class="nt" style="left:468.900px">互动交流</span>
<svg class="ni" style="left:581.3px;top:9.3px" width="18" height="17" viewBox="0 0 18 17" fill="none" stroke="#d8d8d8" stroke-width="1.050" stroke-linecap="round"><circle cx="8.800" cy="5.900" r="1.250"/><rect x="7.500" y="8.700" width="2.600" height="7.300" rx="1.300"/><path d="M5.900 2.700 Q4 6 5.900 9.600"/><path d="M11.700 2.700 Q13.600 6 11.700 9.600"/><path d="M3.200 0.700 Q-0.400 6.200 3.200 11.700"/><path d="M14.400 0.700 Q18 6.200 14.400 11.700"/></svg>
<span class="nt" style="left:602.800px">政声传递</span>
</div>

<div id="panel">
<div id="crumb">
<span class="cur">机构领导</span>
<div class="path"><i>当前位置<span style="margin-left:3.3px">：</span></i><span class="s"></span><span>首页</span><span class="g">&gt;</span><span class="s"></span><span>信息公开</span><span class="g">&gt;</span><span class="s"></span><span>机构职能</span><span class="g">&gt;</span><span class="s"></span><span>机构领导</span></div>
</div>
<div id="band">机构领导</div>
</div>
<a class="pill on" style="left:227.6px;top:203.8px"><svg viewBox="0 0 14 15"><path d="M7 0.700 C9 0.700 10.300 2.100 10.300 3.900 C10.300 5.800 8.900 7.300 7 7.300 C5.100 7.300 3.700 5.800 3.700 3.900 C3.700 2.100 5 0.700 7 0.700Z M7 1.900 C6 3.100 5.300 3.300 4.700 3.500 C4.600 5.200 5.700 6.300 7 6.300 C8.300 6.300 9.400 5.200 9.300 3.600 C8.300 3.400 7.600 2.800 7 1.900Z" fill="currentColor" fill-rule="evenodd"/><path d="M0.200 14.700 C0.400 11.500 1.200 9.600 2.400 8.900 L5 7.800 L6.200 11.200 L6.700 9.200 L6.400 8.300 H7.600 L7.300 9.200 L7.800 11.200 L9 7.800 L11.600 8.900 C12.800 9.600 13.600 11.500 13.800 14.700Z" fill="currentColor"/></svg><span>赵忠良</span></a>
<a class="pill" style="left:350.1px;top:203.8px"><svg viewBox="0 0 14 15"><path d="M7 0.700 C9 0.700 10.300 2.100 10.300 3.900 C10.300 5.800 8.900 7.300 7 7.300 C5.100 7.300 3.700 5.800 3.700 3.900 C3.700 2.100 5 0.700 7 0.700Z M7 1.900 C6 3.100 5.300 3.300 4.700 3.500 C4.600 5.200 5.700 6.300 7 6.300 C8.300 6.300 9.400 5.200 9.300 3.600 C8.300 3.400 7.600 2.800 7 1.900Z" fill="currentColor" fill-rule="evenodd"/><path d="M0.200 14.700 C0.400 11.500 1.200 9.600 2.400 8.900 L5 7.800 L6.200 11.200 L6.700 9.200 L6.400 8.300 H7.600 L7.300 9.200 L7.800 11.200 L9 7.800 L11.600 8.900 C12.800 9.600 13.600 11.500 13.800 14.700Z" fill="currentColor"/></svg><span>张素芬</span></a>
<a class="pill" style="left:472.5px;top:203.8px"><svg viewBox="0 0 14 15"><path d="M7 0.700 C9 0.700 10.300 2.100 10.300 3.900 C10.300 5.800 8.900 7.300 7 7.300 C5.100 7.300 3.700 5.800 3.700 3.900 C3.700 2.100 5 0.700 7 0.700Z M7 1.900 C6 3.100 5.300 3.300 4.700 3.500 C4.600 5.200 5.700 6.300 7 6.300 C8.300 6.300 9.400 5.200 9.300 3.600 C8.300 3.400 7.600 2.800 7 1.900Z" fill="currentColor" fill-rule="evenodd"/><path d="M0.200 14.700 C0.400 11.500 1.200 9.600 2.400 8.900 L5 7.800 L6.200 11.200 L6.700 9.200 L6.400 8.300 H7.600 L7.300 9.200 L7.800 11.200 L9 7.800 L11.600 8.900 C12.800 9.600 13.600 11.500 13.800 14.700Z" fill="currentColor"/></svg><span>刘伟</span></a>
<a class="pill" style="left:595.0px;top:203.8px"><svg viewBox="0 0 14 15"><path d="M7 0.700 C9 0.700 10.300 2.100 10.300 3.900 C10.300 5.800 8.900 7.300 7 7.300 C5.100 7.300 3.700 5.800 3.700 3.900 C3.700 2.100 5 0.700 7 0.700Z M7 1.900 C6 3.100 5.300 3.300 4.700 3.500 C4.600 5.200 5.700 6.300 7 6.300 C8.300 6.300 9.400 5.200 9.300 3.600 C8.300 3.400 7.600 2.800 7 1.900Z" fill="currentColor" fill-rule="evenodd"/><path d="M0.200 14.700 C0.400 11.500 1.200 9.600 2.400 8.900 L5 7.800 L6.200 11.200 L6.700 9.200 L6.400 8.300 H7.600 L7.300 9.200 L7.800 11.200 L9 7.800 L11.600 8.900 C12.800 9.600 13.600 11.500 13.800 14.700Z" fill="currentColor"/></svg><span>杨江涛</span></a>
<a class="pill" style="left:717.4px;top:203.8px"><svg viewBox="0 0 14 15"><path d="M7 0.700 C9 0.700 10.300 2.100 10.300 3.900 C10.300 5.800 8.900 7.300 7 7.300 C5.100 7.300 3.700 5.800 3.700 3.900 C3.700 2.100 5 0.700 7 0.700Z M7 1.900 C6 3.100 5.300 3.300 4.700 3.500 C4.600 5.200 5.700 6.300 7 6.300 C8.300 6.300 9.400 5.200 9.300 3.600 C8.300 3.400 7.600 2.800 7 1.900Z" fill="currentColor" fill-rule="evenodd"/><path d="M0.200 14.700 C0.400 11.500 1.200 9.600 2.400 8.900 L5 7.800 L6.200 11.200 L6.700 9.200 L6.400 8.300 H7.600 L7.300 9.200 L7.800 11.200 L9 7.800 L11.600 8.900 C12.800 9.600 13.600 11.500 13.800 14.700Z" fill="currentColor"/></svg><span>曾宇英</span></a>
<a class="pill" style="left:227.6px;top:233.6px"><svg viewBox="0 0 14 15"><path d="M7 0.700 C9 0.700 10.300 2.100 10.300 3.900 C10.300 5.800 8.900 7.300 7 7.300 C5.100 7.300 3.700 5.800 3.700 3.900 C3.700 2.100 5 0.700 7 0.700Z M7 1.900 C6 3.100 5.300 3.300 4.700 3.500 C4.600 5.200 5.700 6.300 7 6.300 C8.300 6.300 9.400 5.200 9.300 3.600 C8.300 3.400 7.600 2.800 7 1.900Z" fill="currentColor" fill-rule="evenodd"/><path d="M0.200 14.700 C0.400 11.500 1.200 9.600 2.400 8.900 L5 7.800 L6.200 11.200 L6.700 9.200 L6.400 8.300 H7.600 L7.300 9.200 L7.800 11.200 L9 7.800 L11.600 8.900 C12.800 9.600 13.600 11.500 13.800 14.700Z" fill="currentColor"/></svg><span>张一翔</span></a>
<a class="pill" style="left:350.1px;top:233.6px"><svg viewBox="0 0 14 15"><path d="M7 0.700 C9 0.700 10.300 2.100 10.300 3.900 C10.300 5.800 8.900 7.300 7 7.300 C5.100 7.300 3.700 5.800 3.700 3.900 C3.700 2.100 5 0.700 7 0.700Z M7 1.900 C6 3.100 5.300 3.300 4.700 3.500 C4.600 5.200 5.700 6.300 7 6.300 C8.300 6.300 9.400 5.200 9.300 3.600 C8.300 3.400 7.600 2.800 7 1.900Z" fill="currentColor" fill-rule="evenodd"/><path d="M0.200 14.700 C0.400 11.500 1.200 9.600 2.400 8.900 L5 7.800 L6.200 11.200 L6.700 9.200 L6.400 8.300 H7.600 L7.300 9.200 L7.800 11.200 L9 7.800 L11.600 8.900 C12.800 9.600 13.600 11.500 13.800 14.700Z" fill="currentColor"/></svg><span>温靖宇</span></a>
<div id="hr1"></div>
<div id="photo"><svg viewBox="0 0 125 151" preserveAspectRatio="none">
<defs>
<radialGradient id="skin" cx=".5" cy=".42" r=".62"><stop offset="0" stop-color="#ecc4ab"/><stop offset=".7" stop-color="#deae93"/><stop offset="1" stop-color="#c48f74"/></radialGradient>
<linearGradient id="suit" x1="0" y1="0" x2="1" y2="0"><stop offset="0" stop-color="#15161d"/><stop offset=".5" stop-color="#0e0f15"/><stop offset="1" stop-color="#13141b"/></linearGradient>
<filter id="pb" x="-10%" y="-10%" width="120%" height="120%"><feGaussianBlur stdDeviation=".7"/></filter>
</defs>
<rect width="125" height="151" fill="#fcfcfc"/>
<g filter="url(#pb)">
<!-- neck -->
<path d="M47 70 L82 70 L80 100 L64 112 L50 100Z" fill="#cf9b80"/>
<!-- shirt -->
<path d="M43 89 L52 83 L65 108 L78 82 L89 87 L78 128 L68 151 L60 151 L55 128Z" fill="#f0ecdf"/>
<path d="M52 83 L65 108 L58 118 L44 90Z" fill="#f7f4ea"/><path d="M78 82 L65 108 L73 117 L89 87Z" fill="#f7f4ea"/>
<!-- tie -->
<path d="M61 108 L72 107 L71 117 L75.500 151 L58.500 151 L63.500 117Z" fill="#7d8474"/>
<path d="M61 108 L72 107 L70.500 117 L63.500 117Z" fill="#8f9684"/>
<!-- suit -->
<path d="M0 109 L20 99 L43 88 L60 151 L0 151Z" fill="url(#suit)"/>
<path d="M125 98 L106 92 L89 86 L72 151 L125 151Z" fill="url(#suit)"/>
<path d="M43 88 L33 104 L42 110 L36 116 L62 151 L58 151Z" fill="#1b1d26"/>
<path d="M89 86 L99 103 L91 109 L97 114 L71 151 L74 151Z" fill="#1b1d26"/>
<g transform="translate(66.500 0) scale(.95 .975) translate(-65 0)">
<!-- ears -->
<ellipse cx="33.500" cy="52" rx="3.600" ry="9" fill="#d9a58a"/><ellipse cx="96.500" cy="52" rx="3.600" ry="9" fill="#d9a58a"/>
<!-- head -->
<path d="M65 2 C86 2 96 18 96 40 C96 58 92 70 84 79 C78 86 71 89 65 89 C59 89 52 86 46 79 C38 70 34 58 34 40 C34 18 44 2 65 2Z" fill="url(#skin)"/>
<!-- hair -->
<path d="M36 47 C32 32 34 17 44 9 C40 18 38.500 26 39 33 C39 39 37.500 43 36 47Z" fill="#1c1815"/>
<path d="M94 47 C98 32 96 17 86 9 C90 18 91.500 26 91 33 C91 39 92.500 43 94 47Z" fill="#1c1815"/>
<path d="M44 9 C50 3.500 58 1.500 65 1.500 C72 1.500 80 3.500 86 9 C89 14 90 19 90.500 24 C84 12 75 8.500 65 8.500 C55 8.500 46 12 39.500 24 C40 19 41 14 44 9Z" fill="#3b302b" fill-opacity=".62"/>
<!-- brows / eyes -->
<path d="M44 37 Q50 34 57 36.500" stroke="#2b211d" stroke-width="1.800" fill="none"/><path d="M72 36.500 Q79 34 86 37" stroke="#2b211d" stroke-width="1.800" fill="none"/>
<ellipse cx="51" cy="43.500" rx="3.600" ry="1.300" fill="#2a211e"/><ellipse cx="79" cy="43.500" rx="3.600" ry="1.300" fill="#2a211e"/>
<!-- nose & mouth -->
<path d="M62 48 Q60 58 58.500 61 Q65 64.500 71.500 61" stroke="#b9846a" stroke-width="1.300" fill="none"/>
<path d="M54 71.500 Q65 74.500 76 71.500" stroke="#a9604f" stroke-width="1.700" fill="none"/>
<path d="M41 62 Q46 80 58 86" stroke="#c79679" stroke-width="2" fill="none" opacity=".6"/>
</g>
</g>
<!-- glasses -->
<g transform="translate(66.500 0) scale(.95 .975) translate(-65 0)" fill="none" stroke="#8d8d8d" stroke-width=".7"><rect x="41.500" y="38.500" width="19" height="10.500" rx="4"/><rect x="69.500" y="38.500" width="19" height="10.500" rx="4"/><path d="M60.500 42.500 Q65 40.500 69.500 42.500 M41.500 42 L35 40.500 M88.500 42 L95 40.500"/></g>
</svg></div>
<svg class="ic" style="top:313.7px" viewBox="0 0 15 15"><circle cx="7.500" cy="7.500" r="7.500" fill="#eaeaea"/><g fill="none" stroke="#8a8a8a" stroke-width=".8" stroke-linecap="round"><circle cx="7.400" cy="5.500" r="2.500"/><path d="M3.300 10.600 Q4 8.500 5.900 8 M8.900 8 Q10 8.300 10.600 9"/><path d="M3 11.700 H11.900"/><path d="M9.600 10.300 H11.600" stroke-width="1"/></g></svg>
<div class="nm" style="top:315.3px">赵忠良</div>
<svg class="ic" style="top:336.9px" viewBox="0 0 15 15"><circle cx="7.500" cy="7.500" r="7.500" fill="#eaeaea"/><g fill="none" stroke="#808080" stroke-width=".8" stroke-linecap="round"><circle cx="7.700" cy="4.900" r="2.200"/><path d="M3.700 11.600 Q3.900 8.200 6.500 7.300 M9 7.300 Q10.400 7.800 11 9"/></g><circle cx="10.500" cy="10.800" r="1.200" fill="#808080"/></svg>
<div class="nm" style="top:339.1px">党组书记</div>
<div class="row" style="top:364.2px"><b>性　　别</b><span class="cl">：</span>男</div>
<div class="row" style="top:384.6px"><b>民　　族</b><span class="cl">：</span>汉族</div>
<div class="row" style="top:405px"><b>出生年月</b><span class="cl">：</span>1970年1月</div>
<div class="row" style="top:425.5px"><b>学历背景</b><span class="cl">：</span>博士研究生</div>
<div id="wk"></div><div id="wkt">工作分工</div>
<div id="wkd">主持深圳市财政局全面工作</div>
<div id="hr2"></div>
</body>
</html>
